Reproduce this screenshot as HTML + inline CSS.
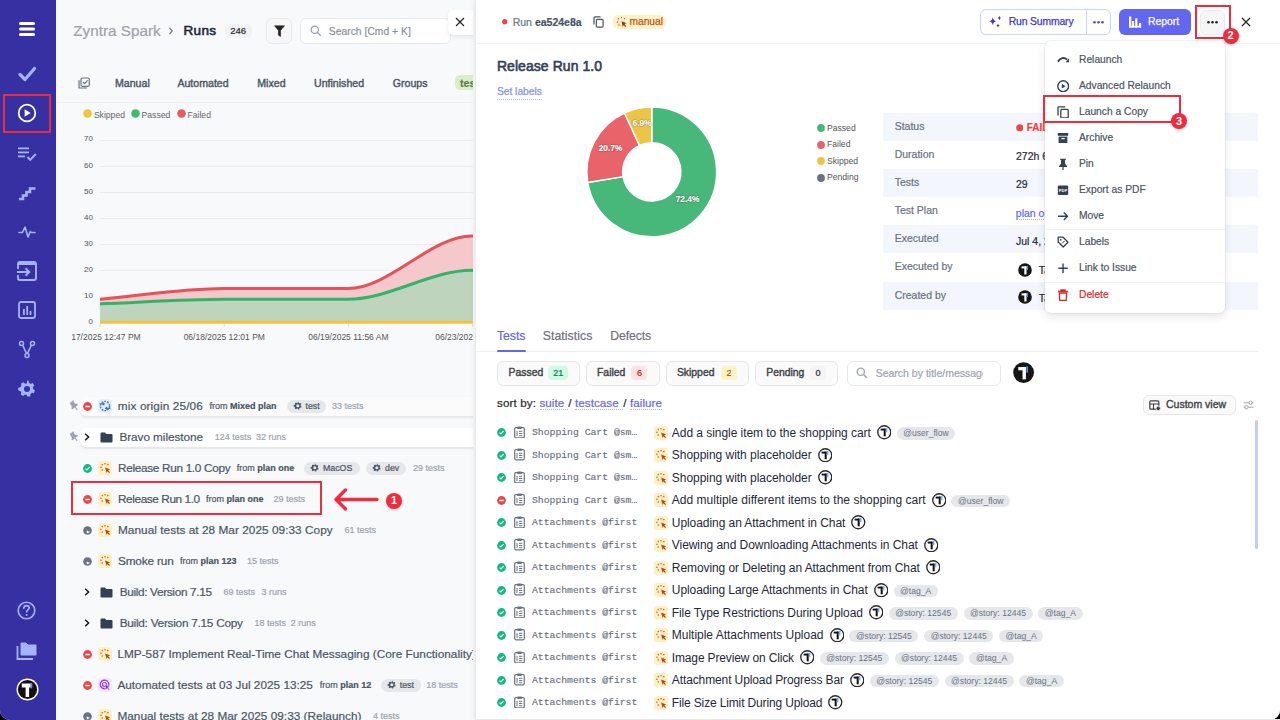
<!DOCTYPE html><html><head><meta charset="utf-8"><style>
*{margin:0;padding:0;box-sizing:border-box}
html,body{width:1280px;height:720px;overflow:hidden;background:#000}
body{position:relative;font-family:"Liberation Sans",sans-serif}
.t{position:absolute;white-space:nowrap;line-height:1;-webkit-text-stroke-width:0.2px}
svg{display:block}
</style></head><body>
<div style="position:absolute;left:0px;top:0px;width:1280px;height:720px;background:#f8f9fb;border-radius:0 0 10px 10px"></div>
<div style="position:absolute;left:0px;top:0px;width:56px;height:720px;background:#3730a3;border-bottom-left-radius:10px"></div>
<svg style="position:absolute;left:18px;top:20px" width="18" height="18" viewBox="0 0 18 18"><rect x="1" y="2" width="16" height="3" rx="1.5" fill="#fff"/><rect x="1" y="7.5" width="16" height="3" rx="1.5" fill="#fff"/><rect x="1" y="13" width="16" height="3" rx="1.5" fill="#fff"/></svg>
<svg style="position:absolute;left:17px;top:65px" width="20" height="18" viewBox="0 0 20 18"><path d="M3 9.5 L8 14.5 L17.5 3.5" stroke="#a5b4fc" stroke-width="3.2" fill="none" stroke-linecap="round" stroke-linejoin="round"/></svg>
<svg style="position:absolute;left:17px;top:103px" width="20" height="20" viewBox="0 0 20 20"><circle cx="10" cy="10" r="8.3" stroke="#fff" stroke-width="1.8" fill="none"/><path d="M7.6 6.2 L13.6 10 L7.6 13.8 Z" fill="#fff"/></svg>
<svg style="position:absolute;left:17px;top:146px" width="20" height="16" viewBox="0 0 20 16"><rect x="1" y="1.5" width="11" height="1.8" fill="#a5b4fc"/><rect x="1" y="5.5" width="11" height="1.8" fill="#a5b4fc"/><rect x="1" y="9.5" width="7" height="1.8" fill="#a5b4fc"/><path d="M10.5 11 L13.2 13.8 L18.8 8" stroke="#a5b4fc" stroke-width="1.9" fill="none"/></svg>
<svg style="position:absolute;left:18px;top:185px" width="19" height="16" viewBox="0 0 19 16"><path d="M1 14 H5 V10.5 H8.5 V7 H12 V3.5 H17.5" stroke="#a5b4fc" stroke-width="2.6" fill="none" stroke-linejoin="miter"/></svg>
<svg style="position:absolute;left:18px;top:225px" width="18" height="14" viewBox="0 0 18 14"><path d="M1 7.5 H4.5 L7 2 L10 12 L12.3 6.5 L13.5 7.5 H17" stroke="#a5b4fc" stroke-width="1.6" fill="none" stroke-linejoin="round" stroke-linecap="round"/></svg>
<svg style="position:absolute;left:16px;top:260px" width="22" height="22" viewBox="0 0 22 22"><rect x="2" y="2" width="18" height="18" rx="2" stroke="#a5b4fc" stroke-width="1.9" fill="none"/><rect x="2" y="2" width="18" height="3" fill="#a5b4fc"/><rect x="0" y="9" width="4" height="6" fill="#3730a3"/><path d="M1 12 H13 M9.5 8.3 L13.3 12 L9.5 15.7" stroke="#a5b4fc" stroke-width="1.9" fill="none"/></svg>
<svg style="position:absolute;left:18px;top:301px" width="18" height="18" viewBox="0 0 18 18"><rect x="1" y="1" width="16" height="16" rx="2" stroke="#a5b4fc" stroke-width="1.8" fill="none"/><rect x="5" y="8" width="1.8" height="6" fill="#a5b4fc"/><rect x="8.3" y="5" width="1.8" height="9" fill="#a5b4fc"/><rect x="11.6" y="10" width="1.8" height="4" fill="#a5b4fc"/></svg>
<svg style="position:absolute;left:18px;top:340px" width="18" height="19" viewBox="0 0 18 19"><circle cx="3.5" cy="3.5" r="2" stroke="#a5b4fc" stroke-width="1.5" fill="none"/><circle cx="14.5" cy="3.5" r="2" stroke="#a5b4fc" stroke-width="1.5" fill="none"/><circle cx="9" cy="15.5" r="2" stroke="#a5b4fc" stroke-width="1.5" fill="none"/><path d="M4.6 5.2 L8.5 13.3 M13.4 5.2 L9.5 13.3" stroke="#a5b4fc" stroke-width="1.5"/></svg>
<svg style="position:absolute;left:17px;top:379px" width="20" height="20" viewBox="0 0 20 20"><path d="M10 1.5l1.6.3.4 2.2c.6.2 1.1.5 1.6.9l2.1-.8 1.6 2.3-1.4 1.7c.2.6.2 1.2.2 1.9l1.8 1.3-.9 2.6-2.2-.1c-.4.5-.9.9-1.4 1.2l-.1 2.2-2.7.5-1-2c-.6 0-1.2 0-1.8-.2l-1.6 1.5-2.4-1.3.5-2.2c-.4-.5-.7-1-.9-1.6l-2.2-.5V8.8l2.2-.5c.2-.6.5-1.1.9-1.6L4.1 4.5 6.5 3.2l1.6 1.5c.6-.2 1.2-.2 1.8-.2z" fill="#a5b4fc"/><circle cx="10" cy="10" r="3" fill="#3730a3"/></svg>
<svg style="position:absolute;left:17px;top:601px" width="19" height="19" viewBox="0 0 19 19"><circle cx="9.5" cy="9.5" r="8.3" stroke="#a5b4fc" stroke-width="1.6" fill="none"/><path d="M6.8 7.2c0-1.6 1.2-2.6 2.7-2.6s2.7 1 2.7 2.4c0 1.9-2.6 2-2.6 4" stroke="#a5b4fc" stroke-width="1.6" fill="none" stroke-linecap="round"/><circle cx="9.6" cy="14" r="1" fill="#a5b4fc"/></svg>
<svg style="position:absolute;left:15px;top:640px" width="23" height="21" viewBox="0 0 23 21"><path d="M6 3 H11 L13 5 H21 V15 H6 Z" fill="#a5b4fc" stroke="#a5b4fc" stroke-width="1" stroke-linejoin="round"/><path d="M2.5 6 V19 H18" stroke="#a5b4fc" stroke-width="1.8" fill="none"/></svg>
<svg style="position:absolute;left:16px;top:678px" width="23" height="23" viewBox="0 0 23 23"><circle cx="11.5" cy="11.5" r="11" fill="#fff"/><circle cx="11.5" cy="11.5" r="9.6" fill="#111"/><path d="M5.8 5.5 H16.2 V9.6 H13.1 V19 H9.6 V9.6 H5.8 Z" fill="#fff"/><rect x="14.4" y="5.5" width="1.4" height="5" fill="#3b82f6"/></svg>
<div class="t" style="left:73.30px;top:22.69px;font-size:15.25px;color:#a1a1aa;font-weight:400;font-family:'Liberation Sans', sans-serif;">Zyntra Spark</div>
<svg style="position:absolute;left:168px;top:27px" width="6" height="8" viewBox="0 0 6 8"><path d="M1.5 1 L4.3 4 L1.5 7" stroke="#6b7280" stroke-width="1.1" fill="none"/></svg>
<div class="t" style="left:183.40px;top:23.87px;font-size:13.5px;color:#1f2937;font-weight:400;font-family:'Liberation Sans', sans-serif;-webkit-text-stroke-width:0.6px;letter-spacing:0.371px;">Runs</div>
<div style="position:absolute;left:225px;top:23.5px;width:27px;height:14.5px;background:#f1f2f4;border-radius:5px"></div>
<div class="t" style="left:230.20px;top:25.96px;font-size:9.5px;color:#27272a;font-weight:400;font-family:'Liberation Sans', sans-serif;">246</div>
<div style="position:absolute;left:266px;top:18px;width:26px;height:26px;background:#f7f7f8;border:1px solid #e5e7eb;border-radius:6px"></div>
<svg style="position:absolute;left:273.5px;top:24.5px" width="11" height="12" viewBox="0 0 11 12"><path d="M0.5 0.8 H10.5 L6.6 5.4 V11.5 L4.4 10.2 V5.4 Z" fill="#262626" stroke="#262626" stroke-width="0.6" stroke-linejoin="round"/></svg>
<div style="position:absolute;left:300px;top:18px;width:151px;height:26px;background:#fff;border:1px solid #e7e8ec;border-radius:6px"></div>
<svg style="position:absolute;left:309.5px;top:24.5px" width="12" height="12" viewBox="0 0 12 12"><circle cx="4.8" cy="4.8" r="3.6" stroke="#9ca3af" stroke-width="1.3" fill="none"/><path d="M7.5 7.5 L10.8 10.8" stroke="#9ca3af" stroke-width="1.3"/></svg>
<div class="t" style="left:328.80px;top:26.62px;font-size:10.25px;color:#8b9099;font-weight:400;font-family:'Liberation Sans', sans-serif;letter-spacing:0.051px;">Search [Cmd + K]</div>
<div style="position:absolute;left:447.5px;top:9.5px;width:28px;height:25px;background:#fff;border-radius:6px 0 0 6px;box-shadow:0 2px 5px rgba(0,0,0,0.08)"></div>
<svg style="position:absolute;left:455px;top:17px" width="10" height="10" viewBox="0 0 10 10"><path d="M1 1 L9 9 M9 1 L1 9" stroke="#222" stroke-width="1.15"/></svg>
<svg style="position:absolute;left:78px;top:77px" width="12" height="12" viewBox="0 0 12 12"><rect x="3" y="1" width="8.3" height="8.3" rx="1.5" stroke="#6b7280" stroke-width="1.2" fill="none"/><path d="M1 3.2 V11 H8.8" stroke="#6b7280" stroke-width="1.2" fill="none"/><path d="M5 5 L6.7 6.7 L9.6 3.4" stroke="#6b7280" stroke-width="1.2" fill="none"/></svg>
<div class="t" style="left:115.00px;top:77.63px;font-size:10.6px;color:#4b5563;font-weight:400;font-family:'Liberation Sans', sans-serif;-webkit-text-stroke-width:0.4px;">Manual</div>
<div class="t" style="left:177.40px;top:77.63px;font-size:10.6px;color:#4b5563;font-weight:400;font-family:'Liberation Sans', sans-serif;-webkit-text-stroke-width:0.4px;">Automated</div>
<div class="t" style="left:257.30px;top:77.63px;font-size:10.6px;color:#4b5563;font-weight:400;font-family:'Liberation Sans', sans-serif;-webkit-text-stroke-width:0.4px;">Mixed</div>
<div class="t" style="left:314.00px;top:77.63px;font-size:10.6px;color:#4b5563;font-weight:400;font-family:'Liberation Sans', sans-serif;-webkit-text-stroke-width:0.4px;">Unfinished</div>
<div class="t" style="left:392.80px;top:77.63px;font-size:10.6px;color:#4b5563;font-weight:400;font-family:'Liberation Sans', sans-serif;-webkit-text-stroke-width:0.4px;">Groups</div>
<div style="position:absolute;left:455px;top:75.3px;width:25px;height:14.8px;background:#d9efc9;border-radius:5px"></div>
<div class="t" style="left:460.00px;top:77.63px;font-size:10.6px;color:#5f7d52;font-weight:600;font-family:'Liberation Sans', sans-serif;">tes</div>
<div style="position:absolute;left:56px;top:101.5px;width:420px;height:1px;background:#eceef1"></div>
<svg style="position:absolute;left:83.0px;top:109.3px" width="9" height="9" viewBox="0 0 9 9"><circle cx="4.5" cy="4.5" r="4.3" fill="#f0c43f"/></svg>
<div class="t" style="left:93.90px;top:110.52px;font-size:8.6px;color:#666;font-weight:400;font-family:'Liberation Sans', sans-serif;-webkit-text-stroke-width:0;">Skipped</div>
<svg style="position:absolute;left:130.8px;top:109.3px" width="9" height="9" viewBox="0 0 9 9"><circle cx="4.5" cy="4.5" r="4.3" fill="#3dba6f"/></svg>
<div class="t" style="left:141.60px;top:110.52px;font-size:8.6px;color:#666;font-weight:400;font-family:'Liberation Sans', sans-serif;-webkit-text-stroke-width:0;">Passed</div>
<svg style="position:absolute;left:176.7px;top:109.3px" width="9" height="9" viewBox="0 0 9 9"><circle cx="4.5" cy="4.5" r="4.3" fill="#e65a60"/></svg>
<div class="t" style="left:187.50px;top:110.52px;font-size:8.6px;color:#666;font-weight:400;font-family:'Liberation Sans', sans-serif;-webkit-text-stroke-width:0;">Failed</div>
<div class="t" style="left:70px;width:23px;text-align:right;top:317.9px;font-size:8px;color:#555;-webkit-text-stroke-width:0">0</div>
<div class="t" style="left:70px;width:23px;text-align:right;top:291.8px;font-size:8px;color:#555;-webkit-text-stroke-width:0">10</div>
<div style="position:absolute;left:100px;top:295.5px;width:376px;height:1px;background:#e9eaec"></div>
<div class="t" style="left:70px;width:23px;text-align:right;top:265.8px;font-size:8px;color:#555;-webkit-text-stroke-width:0">20</div>
<div style="position:absolute;left:100px;top:269.5px;width:376px;height:1px;background:#e9eaec"></div>
<div class="t" style="left:70px;width:23px;text-align:right;top:239.7px;font-size:8px;color:#555;-webkit-text-stroke-width:0">30</div>
<div style="position:absolute;left:100px;top:243.5px;width:376px;height:1px;background:#e9eaec"></div>
<div class="t" style="left:70px;width:23px;text-align:right;top:213.6px;font-size:8px;color:#555;-webkit-text-stroke-width:0">40</div>
<div style="position:absolute;left:100px;top:217.5px;width:376px;height:1px;background:#e9eaec"></div>
<div class="t" style="left:70px;width:23px;text-align:right;top:187.5px;font-size:8px;color:#555;-webkit-text-stroke-width:0">50</div>
<div style="position:absolute;left:100px;top:191.5px;width:376px;height:1px;background:#e9eaec"></div>
<div class="t" style="left:70px;width:23px;text-align:right;top:161.5px;font-size:8px;color:#555;-webkit-text-stroke-width:0">60</div>
<div style="position:absolute;left:100px;top:165.5px;width:376px;height:1px;background:#e9eaec"></div>
<div class="t" style="left:70px;width:23px;text-align:right;top:135.4px;font-size:8px;color:#555;-webkit-text-stroke-width:0">70</div>
<div style="position:absolute;left:100px;top:139.5px;width:376px;height:1px;background:#e9eaec"></div>
<svg style="position:absolute;left:0;top:0" width="476" height="360" viewBox="0 0 476 360">
<path d="M100 299.2 C141.3 295.7 182.7 288.6 224 288.6 L348 288.6 C389.3 288.6 430.7 236 472 236 L476 236 L476 270.3 L472 270.3 C430.7 270.3 389.3 299.2 348 299.2 L224 299.2 C182.7 299.2 141.3 302.3 100 303.8 Z" fill="#f5c8cb"/>
<path d="M100 303.8 C141.3 302.3 182.7 299.2 224 299.2 L348 299.2 C389.3 299.2 430.7 270.3 472 270.3 L476 270.3 L476 322 L100 322 Z" fill="#bfd4bd"/>
<path d="M100 299.2 C141.3 295.7 182.7 288.6 224 288.6 L348 288.6 C389.3 288.6 430.7 236 472 236 L476 236" stroke="#e4525c" stroke-width="3" fill="none"/>
<path d="M100 303.8 C141.3 302.3 182.7 299.2 224 299.2 L348 299.2 C389.3 299.2 430.7 270.3 472 270.3 L476 270.3" stroke="#33b268" stroke-width="3" fill="none"/>
<path d="M100 322.3 H476" stroke="#f0c43f" stroke-width="3"/>
<path d="M100 324 V327 M224.3 324 V327 M348.4 324 V327 M472.6 324 V327" stroke="#ddd" stroke-width="1"/>
</svg>
<div style="position:absolute;left:72px;top:325px;width:404px;height:20px;overflow:hidden">
<div class="t" style="left:-17px;width:90px;text-align:center;top:8px;font-size:8.5px;color:#555;-webkit-text-stroke-width:0">06/17/2025 12:47 PM</div>
<div class="t" style="left:107.30000000000001px;width:90px;text-align:center;top:8px;font-size:8.5px;color:#555;-webkit-text-stroke-width:0">06/18/2025 12:01 PM</div>
<div class="t" style="left:231.39999999999998px;width:90px;text-align:center;top:8px;font-size:8.5px;color:#555;-webkit-text-stroke-width:0">06/19/2025 11:56 AM</div>
<div class="t" style="left:358.6px;width:90px;text-align:center;top:8px;font-size:8.5px;color:#555;-webkit-text-stroke-width:0">06/23/2025 10:02 AM</div>
</div>
<div style="position:absolute;left:79.5px;top:397px;width:397px;height:19px;background:#fbfbfc;border-radius:6px 0 0 6px;box-shadow:0 1.5px 2px rgba(0,0,0,0.08)"></div>
<div style="position:absolute;left:79.5px;top:427.5px;width:397px;height:19px;background:#fff;border-radius:6px 0 0 6px;box-shadow:0 1.5px 2px rgba(0,0,0,0.08)"></div>
<svg style="position:absolute;left:68.5px;top:400px" width="11" height="11" viewBox="0 0 11 11"><g transform="rotate(-38 5.5 5.5)"><path d="M3.2 0.6 H7.8 V1.8 H7 L7.2 4.6 L8.8 6.2 V7.2 H1.2 V6.2 L2.8 4.6 L3 1.8 H3.2 Z" fill="#9ca3af"/><path d="M5 7.2 V10.6" stroke="#9ca3af" stroke-width="1.1"/></g></svg>
<svg style="position:absolute;left:68.5px;top:431px" width="11" height="11" viewBox="0 0 11 11"><g transform="rotate(-38 5.5 5.5)"><path d="M3.2 0.6 H7.8 V1.8 H7 L7.2 4.6 L8.8 6.2 V7.2 H1.2 V6.2 L2.8 4.6 L3 1.8 H3.2 Z" fill="#9ca3af"/><path d="M5 7.2 V10.6" stroke="#9ca3af" stroke-width="1.1"/></g></svg>
<svg style="position:absolute;left:82.8px;top:401.5px" width="9" height="9" viewBox="0 0 9 9"><circle cx="4.5" cy="4.5" r="4.4" fill="#ef4444"/><rect x="2.2" y="3.8" width="4.6" height="1.5" rx="0.5" fill="#fff"/></svg>
<svg style="position:absolute;left:98.3px;top:399px" width="14" height="14" viewBox="0 0 14 14"><rect width="14" height="14" rx="3" fill="#e3eefc"/><circle cx="7" cy="7" r="4.6" stroke="#3572b8" stroke-width="1.2" fill="none" stroke-dasharray="1.8 1.1"/><path d="M1.6 4.9 H5.8" stroke="#3572b8" stroke-width="1.2"/><path d="M4.8 3 L7.2 4.9 L4.8 6.8 Z" fill="#3572b8"/><path d="M12.4 9.3 H8.2" stroke="#3572b8" stroke-width="1.2"/><path d="M9.2 7.4 L6.8 9.3 L9.2 11.2 Z" fill="#3572b8"/></svg>
<div class="t" style="left:117.80px;top:400.81px;font-size:11.8px;color:#4b5563;font-weight:400;font-family:'Liberation Sans', sans-serif;letter-spacing:0.119px;">mix origin 25/06</div>
<div class="t" style="left:209.50px;top:401.58px;font-size:9px;color:#4b5563;font-weight:400;font-family:'Liberation Sans', sans-serif;">from <b>Mixed plan</b></div>
<div style="position:absolute;left:286.5px;top:399.5px;width:39px;height:13px;background:#e5e7eb;border-radius:7px"></div>
<svg style="position:absolute;left:292.5px;top:401.2px" width="9.6" height="9.6" viewBox="0 0 9.6 9.6"><g transform="scale(0.48)"><path d="M10 1.5l1.6.3.4 2.2c.6.2 1.1.5 1.6.9l2.1-.8 1.6 2.3-1.4 1.7c.2.6.2 1.2.2 1.9l1.8 1.3-.9 2.6-2.2-.1c-.4.5-.9.9-1.4 1.2l-.1 2.2-2.7.5-1-2c-.6 0-1.2 0-1.8-.2l-1.6 1.5-2.4-1.3.5-2.2c-.4-.5-.7-1-.9-1.6l-2.2-.5V8.8l2.2-.5c.2-.6.5-1.1.9-1.6L4.1 4.5 6.5 3.2l1.6 1.5c.6-.2 1.2-.2 1.8-.2z" fill="#4b5563"/><circle cx="10" cy="10" r="3.2" fill="#e5e7eb"/></g></svg>
<div class="t" style="left:305.50px;top:401.75px;font-size:8.8px;color:#4b5563;font-weight:400;font-family:'Liberation Sans', sans-serif;">test</div>
<div class="t" style="left:332.00px;top:401.58px;font-size:9px;color:#9ca3af;font-weight:400;font-family:'Liberation Sans', sans-serif;">33 tests</div>
<svg style="position:absolute;left:84px;top:433px" width="6" height="8" viewBox="0 0 6 8"><path d="M1.2 0.8 L4.6 4 L1.2 7.2" stroke="#111" stroke-width="1.4" fill="none"/></svg>
<svg style="position:absolute;left:99.5px;top:431.5px" width="13" height="11" viewBox="0 0 13 11"><path d="M0.5 1.5 Q0.5 0.5 1.5 0.5 H5 L6.3 2 H11.5 Q12.5 2 12.5 3 V9.8 Q12.5 10.6 11.6 10.6 H1.4 Q0.5 10.6 0.5 9.8 Z" fill="#334155"/></svg>
<div class="t" style="left:119.40px;top:431.81px;font-size:11.8px;color:#4b5563;font-weight:400;font-family:'Liberation Sans', sans-serif;letter-spacing:-0.067px;">Bravo milestone</div>
<div class="t" style="left:214.80px;top:432.58px;font-size:9px;color:#9ca3af;font-weight:400;font-family:'Liberation Sans', sans-serif;">124 tests</div>
<div class="t" style="left:256.00px;top:432.58px;font-size:9px;color:#9ca3af;font-weight:400;font-family:'Liberation Sans', sans-serif;">32 runs</div>
<svg style="position:absolute;left:82.8px;top:463.5px" width="9" height="9" viewBox="0 0 9 9"><circle cx="4.5" cy="4.5" r="4.4" fill="#10b981"/><path d="M2.5 4.6 L3.9 6 L6.6 3.2" stroke="#fff" stroke-width="1.2" fill="none"/></svg>
<svg style="position:absolute;left:98.3px;top:461px" width="14" height="14" viewBox="0 0 14 14"><rect x="0" y="0" width="14" height="14" rx="3.2" fill="#fef0c4"/><g transform="scale(1.0)"><path d="M7.1 6.5 L12.2 8.4 L10.2 9.3 L12 11.3 L11.1 12.1 L9.4 10.2 L8.6 12.1 Z" fill="#b4460f"/><circle cx="4.3" cy="3.6" r="0.8" fill="#d0601e"/><circle cx="7" cy="2.7" r="0.8" fill="#d0601e"/><circle cx="9.8" cy="3.6" r="0.8" fill="#d0601e"/><circle cx="2.9" cy="6.2" r="0.8" fill="#d0601e"/><circle cx="4.3" cy="9" r="0.8" fill="#d0601e"/></g></svg>
<div class="t" style="left:118.00px;top:462.81px;font-size:11.8px;color:#4b5563;font-weight:400;font-family:'Liberation Sans', sans-serif;letter-spacing:-0.321px;">Release Run 1.0 Copy</div>
<div class="t" style="left:236.80px;top:463.58px;font-size:9px;color:#4b5563;font-weight:400;font-family:'Liberation Sans', sans-serif;">from <b>plan one</b></div>
<div style="position:absolute;left:304px;top:461.5px;width:56px;height:13px;background:#e5e7eb;border-radius:7px"></div>
<svg style="position:absolute;left:310px;top:463.2px" width="9.6" height="9.6" viewBox="0 0 9.6 9.6"><g transform="scale(0.48)"><path d="M10 1.5l1.6.3.4 2.2c.6.2 1.1.5 1.6.9l2.1-.8 1.6 2.3-1.4 1.7c.2.6.2 1.2.2 1.9l1.8 1.3-.9 2.6-2.2-.1c-.4.5-.9.9-1.4 1.2l-.1 2.2-2.7.5-1-2c-.6 0-1.2 0-1.8-.2l-1.6 1.5-2.4-1.3.5-2.2c-.4-.5-.7-1-.9-1.6l-2.2-.5V8.8l2.2-.5c.2-.6.5-1.1.9-1.6L4.1 4.5 6.5 3.2l1.6 1.5c.6-.2 1.2-.2 1.8-.2z" fill="#4b5563"/><circle cx="10" cy="10" r="3.2" fill="#e5e7eb"/></g></svg>
<div class="t" style="left:323.00px;top:463.75px;font-size:8.8px;color:#4b5563;font-weight:400;font-family:'Liberation Sans', sans-serif;">MacOS</div>
<div style="position:absolute;left:366px;top:461.5px;width:40px;height:13px;background:#e5e7eb;border-radius:7px"></div>
<svg style="position:absolute;left:372px;top:463.2px" width="9.6" height="9.6" viewBox="0 0 9.6 9.6"><g transform="scale(0.48)"><path d="M10 1.5l1.6.3.4 2.2c.6.2 1.1.5 1.6.9l2.1-.8 1.6 2.3-1.4 1.7c.2.6.2 1.2.2 1.9l1.8 1.3-.9 2.6-2.2-.1c-.4.5-.9.9-1.4 1.2l-.1 2.2-2.7.5-1-2c-.6 0-1.2 0-1.8-.2l-1.6 1.5-2.4-1.3.5-2.2c-.4-.5-.7-1-.9-1.6l-2.2-.5V8.8l2.2-.5c.2-.6.5-1.1.9-1.6L4.1 4.5 6.5 3.2l1.6 1.5c.6-.2 1.2-.2 1.8-.2z" fill="#4b5563"/><circle cx="10" cy="10" r="3.2" fill="#e5e7eb"/></g></svg>
<div class="t" style="left:385.00px;top:463.75px;font-size:8.8px;color:#4b5563;font-weight:400;font-family:'Liberation Sans', sans-serif;">dev</div>
<div class="t" style="left:413.00px;top:463.58px;font-size:9px;color:#9ca3af;font-weight:400;font-family:'Liberation Sans', sans-serif;">29 tests</div>
<svg style="position:absolute;left:82.8px;top:494.5px" width="9" height="9" viewBox="0 0 9 9"><circle cx="4.5" cy="4.5" r="4.4" fill="#ef4444"/><rect x="2.2" y="3.8" width="4.6" height="1.5" rx="0.5" fill="#fff"/></svg>
<svg style="position:absolute;left:98.3px;top:492px" width="14" height="14" viewBox="0 0 14 14"><rect x="0" y="0" width="14" height="14" rx="3.2" fill="#fef0c4"/><g transform="scale(1.0)"><path d="M7.1 6.5 L12.2 8.4 L10.2 9.3 L12 11.3 L11.1 12.1 L9.4 10.2 L8.6 12.1 Z" fill="#b4460f"/><circle cx="4.3" cy="3.6" r="0.8" fill="#d0601e"/><circle cx="7" cy="2.7" r="0.8" fill="#d0601e"/><circle cx="9.8" cy="3.6" r="0.8" fill="#d0601e"/><circle cx="2.9" cy="6.2" r="0.8" fill="#d0601e"/><circle cx="4.3" cy="9" r="0.8" fill="#d0601e"/></g></svg>
<div class="t" style="left:118.00px;top:493.81px;font-size:11.8px;color:#4b5563;font-weight:400;font-family:'Liberation Sans', sans-serif;letter-spacing:-0.407px;">Release Run 1.0</div>
<div class="t" style="left:206.00px;top:494.58px;font-size:9px;color:#4b5563;font-weight:400;font-family:'Liberation Sans', sans-serif;">from <b>plan one</b></div>
<div class="t" style="left:273.50px;top:494.58px;font-size:9px;color:#9ca3af;font-weight:400;font-family:'Liberation Sans', sans-serif;">29 tests</div>
<svg style="position:absolute;left:82.8px;top:525.5px" width="9" height="9" viewBox="0 0 9 9"><circle cx="4.5" cy="4.5" r="4.3" fill="#6b7280"/><path d="M3.6 4.4 L7 5.9 L3.9 7.6 Z" fill="#fff"/></svg>
<svg style="position:absolute;left:98.3px;top:523px" width="14" height="14" viewBox="0 0 14 14"><rect x="0" y="0" width="14" height="14" rx="3.2" fill="#fef0c4"/><g transform="scale(1.0)"><path d="M7.1 6.5 L12.2 8.4 L10.2 9.3 L12 11.3 L11.1 12.1 L9.4 10.2 L8.6 12.1 Z" fill="#b4460f"/><circle cx="4.3" cy="3.6" r="0.8" fill="#d0601e"/><circle cx="7" cy="2.7" r="0.8" fill="#d0601e"/><circle cx="9.8" cy="3.6" r="0.8" fill="#d0601e"/><circle cx="2.9" cy="6.2" r="0.8" fill="#d0601e"/><circle cx="4.3" cy="9" r="0.8" fill="#d0601e"/></g></svg>
<div class="t" style="left:118.00px;top:524.81px;font-size:11.8px;color:#4b5563;font-weight:400;font-family:'Liberation Sans', sans-serif;letter-spacing:0.042px;">Manual tests at 28 Mar 2025 09:33 Copy</div>
<div class="t" style="left:344.50px;top:525.58px;font-size:9px;color:#9ca3af;font-weight:400;font-family:'Liberation Sans', sans-serif;">61 tests</div>
<svg style="position:absolute;left:82.8px;top:556.5px" width="9" height="9" viewBox="0 0 9 9"><circle cx="4.5" cy="4.5" r="4.3" fill="#6b7280"/><path d="M3.6 4.4 L7 5.9 L3.9 7.6 Z" fill="#fff"/></svg>
<svg style="position:absolute;left:98.3px;top:554px" width="14" height="14" viewBox="0 0 14 14"><rect x="0" y="0" width="14" height="14" rx="3.2" fill="#fef0c4"/><g transform="scale(1.0)"><path d="M7.1 6.5 L12.2 8.4 L10.2 9.3 L12 11.3 L11.1 12.1 L9.4 10.2 L8.6 12.1 Z" fill="#b4460f"/><circle cx="4.3" cy="3.6" r="0.8" fill="#d0601e"/><circle cx="7" cy="2.7" r="0.8" fill="#d0601e"/><circle cx="9.8" cy="3.6" r="0.8" fill="#d0601e"/><circle cx="2.9" cy="6.2" r="0.8" fill="#d0601e"/><circle cx="4.3" cy="9" r="0.8" fill="#d0601e"/></g></svg>
<div class="t" style="left:118.00px;top:555.81px;font-size:11.8px;color:#4b5563;font-weight:400;font-family:'Liberation Sans', sans-serif;letter-spacing:-0.162px;">Smoke run</div>
<div class="t" style="left:180.00px;top:556.58px;font-size:9px;color:#4b5563;font-weight:400;font-family:'Liberation Sans', sans-serif;">from <b>plan 123</b></div>
<div class="t" style="left:247.00px;top:556.58px;font-size:9px;color:#9ca3af;font-weight:400;font-family:'Liberation Sans', sans-serif;">15 tests</div>
<svg style="position:absolute;left:84px;top:588px" width="6" height="8" viewBox="0 0 6 8"><path d="M1.2 0.8 L4.6 4 L1.2 7.2" stroke="#111" stroke-width="1.4" fill="none"/></svg>
<svg style="position:absolute;left:99.5px;top:586.5px" width="13" height="11" viewBox="0 0 13 11"><path d="M0.5 1.5 Q0.5 0.5 1.5 0.5 H5 L6.3 2 H11.5 Q12.5 2 12.5 3 V9.8 Q12.5 10.6 11.6 10.6 H1.4 Q0.5 10.6 0.5 9.8 Z" fill="#334155"/></svg>
<div class="t" style="left:119.70px;top:586.81px;font-size:11.8px;color:#4b5563;font-weight:400;font-family:'Liberation Sans', sans-serif;letter-spacing:-0.337px;">Build: Version 7.15</div>
<div class="t" style="left:223.50px;top:587.58px;font-size:9px;color:#9ca3af;font-weight:400;font-family:'Liberation Sans', sans-serif;">69 tests</div>
<div class="t" style="left:261.40px;top:587.58px;font-size:9px;color:#9ca3af;font-weight:400;font-family:'Liberation Sans', sans-serif;">3 runs</div>
<svg style="position:absolute;left:84px;top:619px" width="6" height="8" viewBox="0 0 6 8"><path d="M1.2 0.8 L4.6 4 L1.2 7.2" stroke="#111" stroke-width="1.4" fill="none"/></svg>
<svg style="position:absolute;left:99.5px;top:617.5px" width="13" height="11" viewBox="0 0 13 11"><path d="M0.5 1.5 Q0.5 0.5 1.5 0.5 H5 L6.3 2 H11.5 Q12.5 2 12.5 3 V9.8 Q12.5 10.6 11.6 10.6 H1.4 Q0.5 10.6 0.5 9.8 Z" fill="#334155"/></svg>
<div class="t" style="left:119.70px;top:617.81px;font-size:11.8px;color:#4b5563;font-weight:400;font-family:'Liberation Sans', sans-serif;letter-spacing:-0.259px;">Build: Version 7.15 Copy</div>
<div class="t" style="left:254.40px;top:618.58px;font-size:9px;color:#9ca3af;font-weight:400;font-family:'Liberation Sans', sans-serif;">18 tests</div>
<div class="t" style="left:290.70px;top:618.58px;font-size:9px;color:#9ca3af;font-weight:400;font-family:'Liberation Sans', sans-serif;">2 runs</div>
<svg style="position:absolute;left:82.8px;top:649.5px" width="9" height="9" viewBox="0 0 9 9"><circle cx="4.5" cy="4.5" r="4.4" fill="#ef4444"/><rect x="2.2" y="3.8" width="4.6" height="1.5" rx="0.5" fill="#fff"/></svg>
<svg style="position:absolute;left:98.3px;top:647px" width="14" height="14" viewBox="0 0 14 14"><rect x="0" y="0" width="14" height="14" rx="3.2" fill="#fef0c4"/><g transform="scale(1.0)"><path d="M7.1 6.5 L12.2 8.4 L10.2 9.3 L12 11.3 L11.1 12.1 L9.4 10.2 L8.6 12.1 Z" fill="#b4460f"/><circle cx="4.3" cy="3.6" r="0.8" fill="#d0601e"/><circle cx="7" cy="2.7" r="0.8" fill="#d0601e"/><circle cx="9.8" cy="3.6" r="0.8" fill="#d0601e"/><circle cx="2.9" cy="6.2" r="0.8" fill="#d0601e"/><circle cx="4.3" cy="9" r="0.8" fill="#d0601e"/></g></svg>
<div class="t" style="left:117.40px;top:648.81px;font-size:11.8px;color:#4b5563;font-weight:400;font-family:'Liberation Sans', sans-serif;letter-spacing:0.003px;">LMP-587 Implement Real-Time Chat Messaging (Core Functionality)</div>
<svg style="position:absolute;left:82.8px;top:680.5px" width="9" height="9" viewBox="0 0 9 9"><circle cx="4.5" cy="4.5" r="4.4" fill="#ef4444"/><rect x="2.2" y="3.8" width="4.6" height="1.5" rx="0.5" fill="#fff"/></svg>
<svg style="position:absolute;left:98.3px;top:678px" width="14" height="14" viewBox="0 0 14 14"><rect width="14" height="14" rx="3" fill="#f3e8ff"/><circle cx="6.5" cy="6.5" r="4.3" stroke="#9333ea" stroke-width="1.2" fill="none"/><circle cx="6.5" cy="6.5" r="2" stroke="#9333ea" stroke-width="1.1" fill="none"/><path d="M6.8 6.8 L11.8 8.6 L9.8 9.5 L11.6 11.5 L10.8 12.2 L9 10.2 L8.3 12 Z" fill="#7e22ce" stroke="#f3e8ff" stroke-width="0.5"/></svg>
<div class="t" style="left:117.40px;top:679.81px;font-size:11.8px;color:#4b5563;font-weight:400;font-family:'Liberation Sans', sans-serif;letter-spacing:0.003px;">Automated tests at 03 Jul 2025 13:25</div>
<div class="t" style="left:319.70px;top:680.58px;font-size:9px;color:#4b5563;font-weight:400;font-family:'Liberation Sans', sans-serif;">from <b>plan 12</b></div>
<div style="position:absolute;left:380.7px;top:678.5px;width:40px;height:13px;background:#e5e7eb;border-radius:7px"></div>
<svg style="position:absolute;left:386.7px;top:680.2px" width="9.6" height="9.6" viewBox="0 0 9.6 9.6"><g transform="scale(0.48)"><path d="M10 1.5l1.6.3.4 2.2c.6.2 1.1.5 1.6.9l2.1-.8 1.6 2.3-1.4 1.7c.2.6.2 1.2.2 1.9l1.8 1.3-.9 2.6-2.2-.1c-.4.5-.9.9-1.4 1.2l-.1 2.2-2.7.5-1-2c-.6 0-1.2 0-1.8-.2l-1.6 1.5-2.4-1.3.5-2.2c-.4-.5-.7-1-.9-1.6l-2.2-.5V8.8l2.2-.5c.2-.6.5-1.1.9-1.6L4.1 4.5 6.5 3.2l1.6 1.5c.6-.2 1.2-.2 1.8-.2z" fill="#4b5563"/><circle cx="10" cy="10" r="3.2" fill="#e5e7eb"/></g></svg>
<div class="t" style="left:399.70px;top:680.75px;font-size:8.8px;color:#4b5563;font-weight:400;font-family:'Liberation Sans', sans-serif;">test</div>
<div class="t" style="left:426.20px;top:680.58px;font-size:9px;color:#9ca3af;font-weight:400;font-family:'Liberation Sans', sans-serif;">18 tests</div>
<svg style="position:absolute;left:82.8px;top:711.5px" width="9" height="9" viewBox="0 0 9 9"><circle cx="4.5" cy="4.5" r="4.3" fill="#6b7280"/><path d="M3.6 4.4 L7 5.9 L3.9 7.6 Z" fill="#fff"/></svg>
<svg style="position:absolute;left:98.3px;top:709px" width="14" height="14" viewBox="0 0 14 14"><rect x="0" y="0" width="14" height="14" rx="3.2" fill="#fef0c4"/><g transform="scale(1.0)"><path d="M7.1 6.5 L12.2 8.4 L10.2 9.3 L12 11.3 L11.1 12.1 L9.4 10.2 L8.6 12.1 Z" fill="#b4460f"/><circle cx="4.3" cy="3.6" r="0.8" fill="#d0601e"/><circle cx="7" cy="2.7" r="0.8" fill="#d0601e"/><circle cx="9.8" cy="3.6" r="0.8" fill="#d0601e"/><circle cx="2.9" cy="6.2" r="0.8" fill="#d0601e"/><circle cx="4.3" cy="9" r="0.8" fill="#d0601e"/></g></svg>
<div class="t" style="left:117.40px;top:710.81px;font-size:11.8px;color:#4b5563;font-weight:400;font-family:'Liberation Sans', sans-serif;letter-spacing:0.019px;">Manual tests at 28 Mar 2025 09:33 (Relaunch)</div>
<div class="t" style="left:373.00px;top:711.58px;font-size:9px;color:#9ca3af;font-weight:400;font-family:'Liberation Sans', sans-serif;">4 tests</div>
<div style="position:absolute;left:473.3px;top:348.5px;width:2.5px;height:22px;background:#e5e7eb;border-radius:2px"></div>
<div style="position:absolute;left:473.2px;top:0px;width:3.3px;height:720px;background:linear-gradient(90deg,#f7f8f9,#f1f2f4)"></div>
<div style="position:absolute;left:476px;top:0px;width:804px;height:720px;background:#fff;box-shadow:-2px 0 5px rgba(0,0,0,0.05);border-bottom-right-radius:10px"></div>
<div style="position:absolute;left:476px;top:43px;width:804px;height:1px;background:#eef0f3"></div>
<svg style="position:absolute;left:502.3px;top:19.3px" width="5.4" height="5.4" viewBox="0 0 5.4 5.4"><circle cx="2.7" cy="2.7" r="2.6" fill="#ef4444"/></svg>
<div class="t" style="left:512.70px;top:16.51px;font-size:10.5px;color:#64748b;font-weight:400;font-family:'Liberation Sans', sans-serif;">Run <b style="color:#475569">ea524e8a</b></div>
<svg style="position:absolute;left:592.5px;top:16px" width="11" height="12" viewBox="0 0 11 12"><rect x="3.3" y="3.3" width="6.8" height="7.9" rx="1.2" stroke="#4b5563" stroke-width="1.2" fill="none"/><path d="M1 8.5 V2 Q1 0.9 2.1 0.9 H7.5" stroke="#4b5563" stroke-width="1.2" fill="none"/></svg>
<div style="position:absolute;left:612.7px;top:15.2px;width:53.5px;height:13.5px;background:#fef0c7;border-radius:5px"></div>
<svg style="position:absolute;left:616px;top:16.3px" width="12" height="12" viewBox="0 0 12 12"><path d="M5.6 5.2 L10.6 7.2 L8.5 8.1 L10.3 10.2 L9.4 10.9 L7.7 8.9 L6.7 10.9 Z" fill="#9a3412"/><circle cx="5.5" cy="1.6" r="0.7" fill="#c2410c"/><circle cx="8.5" cy="2.6" r="0.7" fill="#c2410c"/><circle cx="2.4" cy="2.8" r="0.7" fill="#c2410c"/><circle cx="1.6" cy="6" r="0.7" fill="#c2410c"/><circle cx="3" cy="9" r="0.7" fill="#c2410c"/></svg>
<div class="t" style="left:629.40px;top:16.72px;font-size:10.25px;color:#b45309;font-weight:400;font-family:'Liberation Sans', sans-serif;">manual</div>
<div style="position:absolute;left:980.3px;top:9px;width:131px;height:26px;background:#fff;border:1px solid #c7d2fe;border-radius:6px"></div>
<div style="position:absolute;left:1085.5px;top:9px;width:1px;height:26px;background:#c7d2fe"></div>
<svg style="position:absolute;left:988px;top:15px" width="14" height="14" viewBox="0 0 14 14"><path d="M4.75 2.2 Q5.3 5.6 8.2 6.2 Q5.3 6.8 4.75 10.2 Q4.2 6.8 1.3 6.2 Q4.2 5.6 4.75 2.2 Z" fill="#4338ca"/><path d="M11.4 0.8 Q11.8 2.7 13 3.1 Q11.8 3.5 11.4 5.4 Q11 3.5 9.8 3.1 Q11 2.7 11.4 0.8 Z" fill="#4338ca"/><path d="M10 8.4 Q10.4 10.2 11.6 10.6 Q10.4 11 10 12.8 Q9.6 11 8.4 10.6 Q9.6 10.2 10 8.4 Z" fill="#4338ca"/></svg>
<div class="t" style="left:1008.70px;top:17.10px;font-size:10.4px;color:#4338ca;font-weight:400;font-family:'Liberation Sans', sans-serif;-webkit-text-stroke:0.25px #4338ca;letter-spacing:-0.151px;">Run Summary</div>
<svg style="position:absolute;left:1092.5px;top:19.5px" width="11" height="5" viewBox="0 0 11 5"><circle cx="1.5" cy="2.3" r="1.3" fill="#4f46e5"/><circle cx="5.5" cy="2.3" r="1.3" fill="#4f46e5"/><circle cx="9.5" cy="2.3" r="1.3" fill="#4f46e5"/></svg>
<div style="position:absolute;left:1119px;top:9.3px;width:72.3px;height:25.5px;background:#6366f1;border-radius:6px"></div>
<svg style="position:absolute;left:1128px;top:15px" width="14" height="13" viewBox="0 0 14 13"><rect x="1" y="1.5" width="2.3" height="11" fill="#fff"/><rect x="4.1" y="6" width="2" height="6.5" fill="#fff"/><rect x="7.2" y="3.3" width="2.2" height="9.2" fill="#fff"/><rect x="11" y="8" width="2.1" height="4.5" fill="#fff"/><rect x="1" y="10.8" width="12.1" height="1.7" fill="#fff"/></svg>
<div class="t" style="left:1148.10px;top:17.00px;font-size:10.4px;color:#fff;font-weight:400;font-family:'Liberation Sans', sans-serif;-webkit-text-stroke:0.25px #fff;letter-spacing:-0.036px;">Report</div>
<div style="position:absolute;left:1200px;top:9.7px;width:25px;height:25px;background:#f6f6f7;border:1px solid #ebebed;border-radius:6px"></div>
<svg style="position:absolute;left:1207px;top:19.5px" width="11" height="5" viewBox="0 0 11 5"><circle cx="1.5" cy="2.3" r="1.3" fill="#222"/><circle cx="5.5" cy="2.3" r="1.3" fill="#222"/><circle cx="9.5" cy="2.3" r="1.3" fill="#222"/></svg>
<svg style="position:absolute;left:1241px;top:17px" width="10" height="10" viewBox="0 0 10 10"><path d="M1 1 L9 9 M9 1 L1 9" stroke="#222" stroke-width="1.15"/></svg>
<div class="t" style="left:496.90px;top:58.75px;font-size:14px;color:#334155;font-weight:400;font-family:'Liberation Sans', sans-serif;-webkit-text-stroke-width:0.6px;letter-spacing:0.067px;">Release Run 1.0</div>
<div class="t" style="left:496.90px;top:86.62px;font-size:10.25px;color:#818cf8;font-weight:400;font-family:'Liberation Sans', sans-serif;border-bottom:1px dotted #a5b4fc;padding-bottom:2px;">Set labels</div>
<svg style="position:absolute;left:0;top:0" width="1280" height="260" viewBox="0 0 1280 260"><path d="M651.75 107.00 A64.9 64.9 0 1 1 587.71 182.46 L623.04 176.63 A29.1 29.1 0 1 0 651.75 142.80 Z" fill="#48b87a" stroke="#fff" stroke-width="1.5" stroke-linejoin="round"/><path d="M587.71 182.46 A64.9 64.9 0 0 1 624.49 113.00 L639.53 145.49 A29.1 29.1 0 0 0 623.04 176.63 Z" fill="#e8636a" stroke="#fff" stroke-width="1.5" stroke-linejoin="round"/><path d="M624.49 113.00 A64.9 64.9 0 0 1 651.75 107.00 L651.75 142.80 A29.1 29.1 0 0 0 639.53 145.49 Z" fill="#ebc545" stroke="#fff" stroke-width="1.5" stroke-linejoin="round"/></svg>
<div class="t" style="left:617px;width:50px;text-align:center;top:119.25px;font-size:8.3px;font-weight:700;color:#fff;text-shadow:0 0 1.5px rgba(0,0,0,0.6),0 0 1px rgba(0,0,0,0.4)">6.9%</div>
<div class="t" style="left:585.5px;width:50px;text-align:center;top:143.5px;font-size:8.3px;font-weight:700;color:#fff;text-shadow:0 0 1.5px rgba(0,0,0,0.6),0 0 1px rgba(0,0,0,0.4)">20.7%</div>
<div class="t" style="left:662.5px;width:50px;text-align:center;top:195.0px;font-size:8.3px;font-weight:700;color:#fff;text-shadow:0 0 1.5px rgba(0,0,0,0.6),0 0 1px rgba(0,0,0,0.4)">72.4%</div>
<svg style="position:absolute;left:816.8px;top:124px" width="8" height="8" viewBox="0 0 8 8"><circle cx="4" cy="4" r="3.9" fill="#48b87a"/></svg>
<div class="t" style="left:827.00px;top:123.92px;font-size:8.6px;color:#555;font-weight:400;font-family:'Liberation Sans', sans-serif;-webkit-text-stroke-width:0;">Passed</div>
<svg style="position:absolute;left:816.8px;top:140.5px" width="8" height="8" viewBox="0 0 8 8"><circle cx="4" cy="4" r="3.9" fill="#e8636a"/></svg>
<div class="t" style="left:827.00px;top:140.42px;font-size:8.6px;color:#555;font-weight:400;font-family:'Liberation Sans', sans-serif;-webkit-text-stroke-width:0;">Failed</div>
<svg style="position:absolute;left:816.8px;top:157.2px" width="8" height="8" viewBox="0 0 8 8"><circle cx="4" cy="4" r="3.9" fill="#ebc545"/></svg>
<div class="t" style="left:827.00px;top:157.12px;font-size:8.6px;color:#555;font-weight:400;font-family:'Liberation Sans', sans-serif;-webkit-text-stroke-width:0;">Skipped</div>
<svg style="position:absolute;left:816.8px;top:173.5px" width="8" height="8" viewBox="0 0 8 8"><circle cx="4" cy="4" r="3.9" fill="#6b7280"/></svg>
<div class="t" style="left:827.00px;top:173.42px;font-size:8.6px;color:#555;font-weight:400;font-family:'Liberation Sans', sans-serif;-webkit-text-stroke-width:0;">Pending</div>
<div style="position:absolute;left:883px;top:113px;width:375px;height:28px;background:#f3f6fd"></div>
<div class="t" style="left:894.70px;top:121.11px;font-size:10.5px;color:#6b7280;font-weight:400;font-family:'Liberation Sans', sans-serif;">Status</div>
<div class="t" style="left:894.70px;top:149.11px;font-size:10.5px;color:#6b7280;font-weight:400;font-family:'Liberation Sans', sans-serif;">Duration</div>
<div style="position:absolute;left:883px;top:169px;width:375px;height:28px;background:#f3f6fd"></div>
<div class="t" style="left:894.70px;top:177.11px;font-size:10.5px;color:#6b7280;font-weight:400;font-family:'Liberation Sans', sans-serif;">Tests</div>
<div class="t" style="left:894.70px;top:205.11px;font-size:10.5px;color:#6b7280;font-weight:400;font-family:'Liberation Sans', sans-serif;">Test Plan</div>
<div style="position:absolute;left:883px;top:225px;width:375px;height:28px;background:#f3f6fd"></div>
<div class="t" style="left:894.70px;top:233.11px;font-size:10.5px;color:#6b7280;font-weight:400;font-family:'Liberation Sans', sans-serif;">Executed</div>
<div class="t" style="left:894.70px;top:261.11px;font-size:10.5px;color:#6b7280;font-weight:400;font-family:'Liberation Sans', sans-serif;">Executed by</div>
<div style="position:absolute;left:883px;top:282px;width:375px;height:28px;background:#f3f6fd"></div>
<div class="t" style="left:894.70px;top:290.11px;font-size:10.5px;color:#6b7280;font-weight:400;font-family:'Liberation Sans', sans-serif;">Created by</div>
<svg style="position:absolute;left:1015.8px;top:124.2px" width="7.5" height="7.5" viewBox="0 0 7.5 7.5"><circle cx="3.75" cy="3.75" r="3.6" fill="#ef4444"/></svg>
<div class="t" style="left:1026.80px;top:123.23px;font-size:10px;color:#ef4444;font-weight:700;font-family:'Liberation Sans', sans-serif;">FAILED</div>
<div class="t" style="left:1016.00px;top:151.21px;font-size:10.5px;color:#1f2937;font-weight:400;font-family:'Liberation Sans', sans-serif;">272h 6m</div>
<div class="t" style="left:1016.00px;top:179.31px;font-size:10.5px;color:#1f2937;font-weight:400;font-family:'Liberation Sans', sans-serif;">29</div>
<div class="t" style="left:1015.80px;top:207.81px;font-size:10.5px;color:#6366f1;font-weight:400;font-family:'Liberation Sans', sans-serif;border-bottom:1px dotted #a5b4fc;padding-bottom:1px">plan one</div>
<div class="t" style="left:1016.00px;top:235.81px;font-size:10.5px;color:#1f2937;font-weight:400;font-family:'Liberation Sans', sans-serif;">Jul 4, 2025</div>
<svg style="position:absolute;left:1018.3px;top:262.5px" width="14" height="14" viewBox="0 0 14 14"><circle cx="7.0" cy="7.0" r="6.8" fill="#151515"/><rect x="3.5" y="3.36" width="5.04" height="2.1" fill="#fff"/><rect x="6.3" y="3.36" width="2.24" height="8.12" fill="#fff"/><rect x="8.82" y="2.8000000000000003" width="1.12" height="4.2" fill="#5b8def"/></svg>
<div class="t" style="left:1038.70px;top:264.61px;font-size:10.5px;color:#1f2937;font-weight:400;font-family:'Liberation Sans', sans-serif;">Tamara</div>
<svg style="position:absolute;left:1018.3px;top:290.3px" width="14" height="14" viewBox="0 0 14 14"><circle cx="7.0" cy="7.0" r="6.8" fill="#151515"/><rect x="3.5" y="3.36" width="5.04" height="2.1" fill="#fff"/><rect x="6.3" y="3.36" width="2.24" height="8.12" fill="#fff"/><rect x="8.82" y="2.8000000000000003" width="1.12" height="4.2" fill="#5b8def"/></svg>
<div class="t" style="left:1038.70px;top:292.61px;font-size:10.5px;color:#1f2937;font-weight:400;font-family:'Liberation Sans', sans-serif;">Tamara</div>
<div class="t" style="left:497.00px;top:329.83px;font-size:12.25px;color:#6366f1;font-weight:400;font-family:'Liberation Sans', sans-serif;letter-spacing:-0.038px;">Tests</div>
<div class="t" style="left:542.70px;top:329.83px;font-size:12.25px;color:#71717a;font-weight:400;font-family:'Liberation Sans', sans-serif;letter-spacing:0.069px;">Statistics</div>
<div class="t" style="left:610.25px;top:329.83px;font-size:12.25px;color:#71717a;font-weight:400;font-family:'Liberation Sans', sans-serif;letter-spacing:-0.111px;">Defects</div>
<div style="position:absolute;left:476px;top:351px;width:782px;height:1px;background:#eef0f3"></div>
<div style="position:absolute;left:497px;top:350.3px;width:28.5px;height:2.2px;background:#6366f1;border-radius:1px"></div>
<div style="position:absolute;left:496.75px;top:360.8px;width:83.5px;height:25px;background:#fafafa;border:1px solid #e7e7ea;border-radius:6px"></div>
<div class="t" style="left:508.60px;top:368.30px;font-size:10.4px;color:#3f3f46;font-weight:400;font-family:'Liberation Sans', sans-serif;-webkit-text-stroke-width:0.4px;">Passed</div>
<div style="position:absolute;left:548.4px;top:366px;width:19.6px;height:14px;background:#d1fae5;border-radius:4px"></div>
<div class="t" style="left:548.4px;width:19.6px;text-align:center;top:369px;font-size:9px;color:#047857">21</div>
<div style="position:absolute;left:585.6px;top:360.8px;width:74px;height:25px;background:#fafafa;border:1px solid #e7e7ea;border-radius:6px"></div>
<div class="t" style="left:597.00px;top:368.30px;font-size:10.4px;color:#3f3f46;font-weight:400;font-family:'Liberation Sans', sans-serif;-webkit-text-stroke-width:0.4px;">Failed</div>
<div style="position:absolute;left:631.4px;top:366px;width:16.1px;height:14px;background:#fee2e2;border-radius:4px"></div>
<div class="t" style="left:631.4px;width:16.1px;text-align:center;top:369px;font-size:9px;color:#b91c1c">6</div>
<div style="position:absolute;left:665.5px;top:360.8px;width:83.3px;height:25px;background:#fafafa;border:1px solid #e7e7ea;border-radius:6px"></div>
<div class="t" style="left:676.90px;top:368.30px;font-size:10.4px;color:#3f3f46;font-weight:400;font-family:'Liberation Sans', sans-serif;-webkit-text-stroke-width:0.4px;">Skipped</div>
<div style="position:absolute;left:721px;top:366px;width:16px;height:14px;background:#fef3c7;border-radius:4px"></div>
<div class="t" style="left:721px;width:16px;text-align:center;top:369px;font-size:9px;color:#b45309">2</div>
<div style="position:absolute;left:754.5px;top:360.8px;width:83.5px;height:25px;background:#fafafa;border:1px solid #e7e7ea;border-radius:6px"></div>
<div class="t" style="left:766.25px;top:368.30px;font-size:10.4px;color:#3f3f46;font-weight:400;font-family:'Liberation Sans', sans-serif;-webkit-text-stroke-width:0.4px;">Pending</div>
<div style="position:absolute;left:809.7px;top:366px;width:16.7px;height:14px;background:#f4f4f5;border-radius:4px"></div>
<div class="t" style="left:809.7px;width:16.7px;text-align:center;top:369px;font-size:9px;color:#27272a">0</div>
<div style="position:absolute;left:847.4px;top:360.7px;width:154px;height:25.3px;background:#fff;border:1px solid #e7e8ec;border-radius:6px"></div>
<svg style="position:absolute;left:856px;top:366.5px" width="12" height="12" viewBox="0 0 12 12"><circle cx="4.8" cy="4.8" r="3.6" stroke="#9ca3af" stroke-width="1.3" fill="none"/><path d="M7.5 7.5 L10.8 10.8" stroke="#9ca3af" stroke-width="1.3"/></svg>
<div style="position:absolute;left:875.7px;top:366px;width:107px;height:16px;overflow:hidden">
<div class="t" style="left:0.00px;top:1.71px;font-size:10.5px;color:#9ca3af;font-weight:400;font-family:'Liberation Sans', sans-serif;">Search by title/message</div>
</div>
<svg style="position:absolute;left:1012.5px;top:362.3px" width="21.2" height="21.2" viewBox="0 0 21.2 21.2"><circle cx="10.6" cy="10.6" r="10.4" fill="#151515"/><rect x="5.3" y="5.088" width="7.632" height="3.1799999999999997" fill="#fff"/><rect x="9.54" y="5.088" width="3.392" height="12.296" fill="#fff"/><rect x="13.356" y="4.24" width="1.696" height="6.359999999999999" fill="#5b8def"/></svg>
<div class="t" style="left:497.00px;top:397.08px;font-size:11.6px;color:#27272a;font-weight:400;font-family:'Liberation Sans', sans-serif;letter-spacing:0.146px;">sort by:</div>
<div class="t" style="left:539.50px;top:397.08px;font-size:11.6px;color:#6366f1;font-weight:400;font-family:'Liberation Sans', sans-serif;border-bottom:1px dotted #a5b4fc;padding-bottom:0.5px;padding-right:3.7px;letter-spacing:0.059px;">suite</div>
<div class="t" style="left:568.30px;top:397.08px;font-size:11.6px;color:#27272a;font-weight:400;font-family:'Liberation Sans', sans-serif;">/</div>
<div class="t" style="left:575.00px;top:397.08px;font-size:11.6px;color:#6366f1;font-weight:400;font-family:'Liberation Sans', sans-serif;border-bottom:1px dotted #a5b4fc;padding-bottom:0.5px;padding-right:4.3px;letter-spacing:0.062px;">testcase</div>
<div class="t" style="left:623.20px;top:397.08px;font-size:11.6px;color:#27272a;font-weight:400;font-family:'Liberation Sans', sans-serif;">/</div>
<div class="t" style="left:630.00px;top:397.08px;font-size:11.6px;color:#6366f1;font-weight:400;font-family:'Liberation Sans', sans-serif;border-bottom:1px dotted #a5b4fc;padding-bottom:0.5px;letter-spacing:0.058px;">failure</div>
<div style="position:absolute;left:1142.6px;top:394.6px;width:93px;height:20px;background:#fafafa;border:1px solid #e7e7ea;border-radius:6px"></div>
<svg style="position:absolute;left:1148.5px;top:399.5px" width="12" height="11" viewBox="0 0 12 11"><rect x="0.8" y="0.8" width="9" height="8.4" rx="1" stroke="#3f3f46" stroke-width="1.2" fill="none"/><path d="M0.8 4 H9.8 M4.5 4 V9.2" stroke="#3f3f46" stroke-width="1.1"/><circle cx="9.2" cy="8.4" r="2.2" fill="#3f3f46" stroke="#fafafa" stroke-width="0.8"/></svg>
<div class="t" style="left:1166.00px;top:399.41px;font-size:10.5px;color:#3f3f46;font-weight:400;font-family:'Liberation Sans', sans-serif;-webkit-text-stroke-width:0.35px;">Custom view</div>
<svg style="position:absolute;left:1242.5px;top:399.5px" width="11" height="10" viewBox="0 0 11 10"><path d="M0.5 2.8 H10.5 M0.5 7.2 H10.5" stroke="#a1a1aa" stroke-width="1"/><circle cx="7.5" cy="2.8" r="1.7" fill="#fff" stroke="#a1a1aa" stroke-width="1"/><circle cx="3.5" cy="7.2" r="1.7" fill="#fff" stroke="#a1a1aa" stroke-width="1"/></svg>
<div style="position:absolute;left:1254.7px;top:420px;width:3.5px;height:129px;background:#c3cafc;border-radius:2px"></div>
<svg style="position:absolute;left:497.2px;top:428.0px" width="9" height="9" viewBox="0 0 9 9"><circle cx="4.5" cy="4.5" r="4.4" fill="#10b981"/><path d="M2.5 4.6 L3.9 6 L6.6 3.2" stroke="#fff" stroke-width="1.2" fill="none"/></svg>
<svg style="position:absolute;left:513.6px;top:425.6px" width="11" height="12.5" viewBox="0 0 11 12.5"><rect x="0.7" y="1.6" width="9.6" height="10.2" rx="1.2" stroke="#6b7280" stroke-width="1.2" fill="none"/><rect x="3.2" y="0.5" width="4.6" height="2.4" rx="0.6" fill="#6b7280"/><path d="M3 5 V10 M5 5.3 H8.3 M5 7.5 H8.3 M5 9.7 H8.3" stroke="#6b7280" stroke-width="1"/></svg>
<div class="t" style="left:532.00px;top:428.35px;font-size:9.75px;color:#666d7a;font-weight:400;font-family:'Liberation Mono', monospace;-webkit-text-stroke-width:0.12px;">Shopping Cart @sm…</div>
<svg style="position:absolute;left:654.4px;top:425.5px" width="14" height="14" viewBox="0 0 14 14"><rect x="0" y="0" width="14" height="14" rx="3.2" fill="#fef0c4"/><g transform="scale(1.0)"><path d="M7.1 6.5 L12.2 8.4 L10.2 9.3 L12 11.3 L11.1 12.1 L9.4 10.2 L8.6 12.1 Z" fill="#b4460f"/><circle cx="4.3" cy="3.6" r="0.8" fill="#d0601e"/><circle cx="7" cy="2.7" r="0.8" fill="#d0601e"/><circle cx="9.8" cy="3.6" r="0.8" fill="#d0601e"/><circle cx="2.9" cy="6.2" r="0.8" fill="#d0601e"/><circle cx="4.3" cy="9" r="0.8" fill="#d0601e"/></g></svg>
<div style="position:absolute;left:671.8px;top:424.50px;height:16px;display:flex;align-items:center;white-space:nowrap"><span style="font-size:12px;color:#1f2937;line-height:16px;letter-spacing:-0.047px;width:199.00px;display:inline-block">Add a single item to the shopping cart</span><span style="width:5.6px"></span><svg width="14.5" height="14.5" viewBox="0 0 14.5 14.5" style="display:inline-block;flex:none;position:relative;left:0.5px;top:0px"><circle cx="7.25" cy="7.25" r="6.5" fill="#fff" stroke="#2a2a2a" stroke-width="1.3"/><rect x="3.625" y="3.625" width="5.074999999999999" height="1.885" fill="#111"/><rect x="6.67" y="3.625" width="2.0300000000000002" height="7.6850000000000005" fill="#111"/><rect x="8.7" y="2.9000000000000004" width="1.74" height="4.35" fill="#86a9ef"/></svg><span style="flex:none;background:#e5e7eb;color:#6b7280;font-size:8.6px;line-height:12.5px;height:12.5px;padding:0 6.5px;border-radius:6.5px;margin-left:5.8px;position:relative;top:0.8px">@user_flow</span></div>
<svg style="position:absolute;left:497.2px;top:450.5px" width="9" height="9" viewBox="0 0 9 9"><circle cx="4.5" cy="4.5" r="4.4" fill="#10b981"/><path d="M2.5 4.6 L3.9 6 L6.6 3.2" stroke="#fff" stroke-width="1.2" fill="none"/></svg>
<svg style="position:absolute;left:513.6px;top:448.1px" width="11" height="12.5" viewBox="0 0 11 12.5"><rect x="0.7" y="1.6" width="9.6" height="10.2" rx="1.2" stroke="#6b7280" stroke-width="1.2" fill="none"/><rect x="3.2" y="0.5" width="4.6" height="2.4" rx="0.6" fill="#6b7280"/><path d="M3 5 V10 M5 5.3 H8.3 M5 7.5 H8.3 M5 9.7 H8.3" stroke="#6b7280" stroke-width="1"/></svg>
<div class="t" style="left:532.00px;top:450.85px;font-size:9.75px;color:#666d7a;font-weight:400;font-family:'Liberation Mono', monospace;-webkit-text-stroke-width:0.12px;">Shopping Cart @sm…</div>
<svg style="position:absolute;left:654.4px;top:448.0px" width="14" height="14" viewBox="0 0 14 14"><rect x="0" y="0" width="14" height="14" rx="3.2" fill="#fef0c4"/><g transform="scale(1.0)"><path d="M7.1 6.5 L12.2 8.4 L10.2 9.3 L12 11.3 L11.1 12.1 L9.4 10.2 L8.6 12.1 Z" fill="#b4460f"/><circle cx="4.3" cy="3.6" r="0.8" fill="#d0601e"/><circle cx="7" cy="2.7" r="0.8" fill="#d0601e"/><circle cx="9.8" cy="3.6" r="0.8" fill="#d0601e"/><circle cx="2.9" cy="6.2" r="0.8" fill="#d0601e"/><circle cx="4.3" cy="9" r="0.8" fill="#d0601e"/></g></svg>
<div style="position:absolute;left:671.8px;top:447.00px;height:16px;display:flex;align-items:center;white-space:nowrap"><span style="font-size:12px;color:#1f2937;line-height:16px;letter-spacing:-0.035px;width:139.90px;display:inline-block">Shopping with placeholder</span><span style="width:5.6px"></span><svg width="14.5" height="14.5" viewBox="0 0 14.5 14.5" style="display:inline-block;flex:none;position:relative;left:0.5px;top:0px"><circle cx="7.25" cy="7.25" r="6.5" fill="#fff" stroke="#2a2a2a" stroke-width="1.3"/><rect x="3.625" y="3.625" width="5.074999999999999" height="1.885" fill="#111"/><rect x="6.67" y="3.625" width="2.0300000000000002" height="7.6850000000000005" fill="#111"/><rect x="8.7" y="2.9000000000000004" width="1.74" height="4.35" fill="#86a9ef"/></svg></div>
<svg style="position:absolute;left:497.2px;top:473.0px" width="9" height="9" viewBox="0 0 9 9"><circle cx="4.5" cy="4.5" r="4.4" fill="#10b981"/><path d="M2.5 4.6 L3.9 6 L6.6 3.2" stroke="#fff" stroke-width="1.2" fill="none"/></svg>
<svg style="position:absolute;left:513.6px;top:470.6px" width="11" height="12.5" viewBox="0 0 11 12.5"><rect x="0.7" y="1.6" width="9.6" height="10.2" rx="1.2" stroke="#6b7280" stroke-width="1.2" fill="none"/><rect x="3.2" y="0.5" width="4.6" height="2.4" rx="0.6" fill="#6b7280"/><path d="M3 5 V10 M5 5.3 H8.3 M5 7.5 H8.3 M5 9.7 H8.3" stroke="#6b7280" stroke-width="1"/></svg>
<div class="t" style="left:532.00px;top:473.35px;font-size:9.75px;color:#666d7a;font-weight:400;font-family:'Liberation Mono', monospace;-webkit-text-stroke-width:0.12px;">Shopping Cart @sm…</div>
<svg style="position:absolute;left:654.4px;top:470.5px" width="14" height="14" viewBox="0 0 14 14"><rect x="0" y="0" width="14" height="14" rx="3.2" fill="#fef0c4"/><g transform="scale(1.0)"><path d="M7.1 6.5 L12.2 8.4 L10.2 9.3 L12 11.3 L11.1 12.1 L9.4 10.2 L8.6 12.1 Z" fill="#b4460f"/><circle cx="4.3" cy="3.6" r="0.8" fill="#d0601e"/><circle cx="7" cy="2.7" r="0.8" fill="#d0601e"/><circle cx="9.8" cy="3.6" r="0.8" fill="#d0601e"/><circle cx="2.9" cy="6.2" r="0.8" fill="#d0601e"/><circle cx="4.3" cy="9" r="0.8" fill="#d0601e"/></g></svg>
<div style="position:absolute;left:671.8px;top:469.50px;height:16px;display:flex;align-items:center;white-space:nowrap"><span style="font-size:12px;color:#1f2937;line-height:16px;letter-spacing:-0.035px;width:139.90px;display:inline-block">Shopping with placeholder</span><span style="width:5.6px"></span><svg width="14.5" height="14.5" viewBox="0 0 14.5 14.5" style="display:inline-block;flex:none;position:relative;left:0.5px;top:0px"><circle cx="7.25" cy="7.25" r="6.5" fill="#fff" stroke="#2a2a2a" stroke-width="1.3"/><rect x="3.625" y="3.625" width="5.074999999999999" height="1.885" fill="#111"/><rect x="6.67" y="3.625" width="2.0300000000000002" height="7.6850000000000005" fill="#111"/><rect x="8.7" y="2.9000000000000004" width="1.74" height="4.35" fill="#86a9ef"/></svg></div>
<svg style="position:absolute;left:497.2px;top:495.5px" width="9" height="9" viewBox="0 0 9 9"><circle cx="4.5" cy="4.5" r="4.4" fill="#ef4444"/><rect x="2.2" y="3.8" width="4.6" height="1.5" rx="0.5" fill="#fff"/></svg>
<svg style="position:absolute;left:513.6px;top:493.1px" width="11" height="12.5" viewBox="0 0 11 12.5"><rect x="0.7" y="1.6" width="9.6" height="10.2" rx="1.2" stroke="#6b7280" stroke-width="1.2" fill="none"/><rect x="3.2" y="0.5" width="4.6" height="2.4" rx="0.6" fill="#6b7280"/><path d="M3 5 V10 M5 5.3 H8.3 M5 7.5 H8.3 M5 9.7 H8.3" stroke="#6b7280" stroke-width="1"/></svg>
<div class="t" style="left:532.00px;top:495.85px;font-size:9.75px;color:#666d7a;font-weight:400;font-family:'Liberation Mono', monospace;-webkit-text-stroke-width:0.12px;">Shopping Cart @sm…</div>
<svg style="position:absolute;left:654.4px;top:493.0px" width="14" height="14" viewBox="0 0 14 14"><rect x="0" y="0" width="14" height="14" rx="3.2" fill="#fef0c4"/><g transform="scale(1.0)"><path d="M7.1 6.5 L12.2 8.4 L10.2 9.3 L12 11.3 L11.1 12.1 L9.4 10.2 L8.6 12.1 Z" fill="#b4460f"/><circle cx="4.3" cy="3.6" r="0.8" fill="#d0601e"/><circle cx="7" cy="2.7" r="0.8" fill="#d0601e"/><circle cx="9.8" cy="3.6" r="0.8" fill="#d0601e"/><circle cx="2.9" cy="6.2" r="0.8" fill="#d0601e"/><circle cx="4.3" cy="9" r="0.8" fill="#d0601e"/></g></svg>
<div style="position:absolute;left:671.8px;top:492.00px;height:16px;display:flex;align-items:center;white-space:nowrap"><span style="font-size:12px;color:#1f2937;line-height:16px;letter-spacing:0.011px;width:253.80px;display:inline-block">Add multiple different items to the shopping cart</span><span style="width:5.6px"></span><svg width="14.5" height="14.5" viewBox="0 0 14.5 14.5" style="display:inline-block;flex:none;position:relative;left:0.5px;top:0px"><circle cx="7.25" cy="7.25" r="6.5" fill="#fff" stroke="#2a2a2a" stroke-width="1.3"/><rect x="3.625" y="3.625" width="5.074999999999999" height="1.885" fill="#111"/><rect x="6.67" y="3.625" width="2.0300000000000002" height="7.6850000000000005" fill="#111"/><rect x="8.7" y="2.9000000000000004" width="1.74" height="4.35" fill="#86a9ef"/></svg><span style="flex:none;background:#e5e7eb;color:#6b7280;font-size:8.6px;line-height:12.5px;height:12.5px;padding:0 6.5px;border-radius:6.5px;margin-left:5.8px;position:relative;top:0.8px">@user_flow</span></div>
<svg style="position:absolute;left:497.2px;top:518.0px" width="9" height="9" viewBox="0 0 9 9"><circle cx="4.5" cy="4.5" r="4.4" fill="#10b981"/><path d="M2.5 4.6 L3.9 6 L6.6 3.2" stroke="#fff" stroke-width="1.2" fill="none"/></svg>
<svg style="position:absolute;left:513.6px;top:515.6px" width="11" height="12.5" viewBox="0 0 11 12.5"><rect x="0.7" y="1.6" width="9.6" height="10.2" rx="1.2" stroke="#6b7280" stroke-width="1.2" fill="none"/><rect x="3.2" y="0.5" width="4.6" height="2.4" rx="0.6" fill="#6b7280"/><path d="M3 5 V10 M5 5.3 H8.3 M5 7.5 H8.3 M5 9.7 H8.3" stroke="#6b7280" stroke-width="1"/></svg>
<div class="t" style="left:532.00px;top:518.35px;font-size:9.75px;color:#666d7a;font-weight:400;font-family:'Liberation Mono', monospace;-webkit-text-stroke-width:0.12px;">Attachments @first</div>
<svg style="position:absolute;left:654.4px;top:515.5px" width="14" height="14" viewBox="0 0 14 14"><rect x="0" y="0" width="14" height="14" rx="3.2" fill="#fef0c4"/><g transform="scale(1.0)"><path d="M7.1 6.5 L12.2 8.4 L10.2 9.3 L12 11.3 L11.1 12.1 L9.4 10.2 L8.6 12.1 Z" fill="#b4460f"/><circle cx="4.3" cy="3.6" r="0.8" fill="#d0601e"/><circle cx="7" cy="2.7" r="0.8" fill="#d0601e"/><circle cx="9.8" cy="3.6" r="0.8" fill="#d0601e"/><circle cx="2.9" cy="6.2" r="0.8" fill="#d0601e"/><circle cx="4.3" cy="9" r="0.8" fill="#d0601e"/></g></svg>
<div style="position:absolute;left:671.8px;top:514.50px;height:16px;display:flex;align-items:center;white-space:nowrap"><span style="font-size:12px;color:#1f2937;line-height:16px;letter-spacing:-0.063px;width:173.50px;display:inline-block">Uploading an Attachment in Chat</span><span style="width:5.6px"></span><svg width="14.5" height="14.5" viewBox="0 0 14.5 14.5" style="display:inline-block;flex:none;position:relative;left:0.5px;top:0px"><circle cx="7.25" cy="7.25" r="6.5" fill="#fff" stroke="#2a2a2a" stroke-width="1.3"/><rect x="3.625" y="3.625" width="5.074999999999999" height="1.885" fill="#111"/><rect x="6.67" y="3.625" width="2.0300000000000002" height="7.6850000000000005" fill="#111"/><rect x="8.7" y="2.9000000000000004" width="1.74" height="4.35" fill="#86a9ef"/></svg></div>
<svg style="position:absolute;left:497.2px;top:540.5px" width="9" height="9" viewBox="0 0 9 9"><circle cx="4.5" cy="4.5" r="4.4" fill="#10b981"/><path d="M2.5 4.6 L3.9 6 L6.6 3.2" stroke="#fff" stroke-width="1.2" fill="none"/></svg>
<svg style="position:absolute;left:513.6px;top:538.1px" width="11" height="12.5" viewBox="0 0 11 12.5"><rect x="0.7" y="1.6" width="9.6" height="10.2" rx="1.2" stroke="#6b7280" stroke-width="1.2" fill="none"/><rect x="3.2" y="0.5" width="4.6" height="2.4" rx="0.6" fill="#6b7280"/><path d="M3 5 V10 M5 5.3 H8.3 M5 7.5 H8.3 M5 9.7 H8.3" stroke="#6b7280" stroke-width="1"/></svg>
<div class="t" style="left:532.00px;top:540.85px;font-size:9.75px;color:#666d7a;font-weight:400;font-family:'Liberation Mono', monospace;-webkit-text-stroke-width:0.12px;">Attachments @first</div>
<svg style="position:absolute;left:654.4px;top:538.0px" width="14" height="14" viewBox="0 0 14 14"><rect x="0" y="0" width="14" height="14" rx="3.2" fill="#fef0c4"/><g transform="scale(1.0)"><path d="M7.1 6.5 L12.2 8.4 L10.2 9.3 L12 11.3 L11.1 12.1 L9.4 10.2 L8.6 12.1 Z" fill="#b4460f"/><circle cx="4.3" cy="3.6" r="0.8" fill="#d0601e"/><circle cx="7" cy="2.7" r="0.8" fill="#d0601e"/><circle cx="9.8" cy="3.6" r="0.8" fill="#d0601e"/><circle cx="2.9" cy="6.2" r="0.8" fill="#d0601e"/><circle cx="4.3" cy="9" r="0.8" fill="#d0601e"/></g></svg>
<div style="position:absolute;left:671.8px;top:537.00px;height:16px;display:flex;align-items:center;white-space:nowrap"><span style="font-size:12px;color:#1f2937;line-height:16px;letter-spacing:-0.061px;width:246.00px;display:inline-block">Viewing and Downloading Attachments in Chat</span><span style="width:5.6px"></span><svg width="14.5" height="14.5" viewBox="0 0 14.5 14.5" style="display:inline-block;flex:none;position:relative;left:0.5px;top:0px"><circle cx="7.25" cy="7.25" r="6.5" fill="#fff" stroke="#2a2a2a" stroke-width="1.3"/><rect x="3.625" y="3.625" width="5.074999999999999" height="1.885" fill="#111"/><rect x="6.67" y="3.625" width="2.0300000000000002" height="7.6850000000000005" fill="#111"/><rect x="8.7" y="2.9000000000000004" width="1.74" height="4.35" fill="#86a9ef"/></svg></div>
<svg style="position:absolute;left:497.2px;top:563.0px" width="9" height="9" viewBox="0 0 9 9"><circle cx="4.5" cy="4.5" r="4.4" fill="#10b981"/><path d="M2.5 4.6 L3.9 6 L6.6 3.2" stroke="#fff" stroke-width="1.2" fill="none"/></svg>
<svg style="position:absolute;left:513.6px;top:560.6px" width="11" height="12.5" viewBox="0 0 11 12.5"><rect x="0.7" y="1.6" width="9.6" height="10.2" rx="1.2" stroke="#6b7280" stroke-width="1.2" fill="none"/><rect x="3.2" y="0.5" width="4.6" height="2.4" rx="0.6" fill="#6b7280"/><path d="M3 5 V10 M5 5.3 H8.3 M5 7.5 H8.3 M5 9.7 H8.3" stroke="#6b7280" stroke-width="1"/></svg>
<div class="t" style="left:532.00px;top:563.35px;font-size:9.75px;color:#666d7a;font-weight:400;font-family:'Liberation Mono', monospace;-webkit-text-stroke-width:0.12px;">Attachments @first</div>
<svg style="position:absolute;left:654.4px;top:560.5px" width="14" height="14" viewBox="0 0 14 14"><rect x="0" y="0" width="14" height="14" rx="3.2" fill="#fef0c4"/><g transform="scale(1.0)"><path d="M7.1 6.5 L12.2 8.4 L10.2 9.3 L12 11.3 L11.1 12.1 L9.4 10.2 L8.6 12.1 Z" fill="#b4460f"/><circle cx="4.3" cy="3.6" r="0.8" fill="#d0601e"/><circle cx="7" cy="2.7" r="0.8" fill="#d0601e"/><circle cx="9.8" cy="3.6" r="0.8" fill="#d0601e"/><circle cx="2.9" cy="6.2" r="0.8" fill="#d0601e"/><circle cx="4.3" cy="9" r="0.8" fill="#d0601e"/></g></svg>
<div style="position:absolute;left:671.8px;top:559.50px;height:16px;display:flex;align-items:center;white-space:nowrap"><span style="font-size:12px;color:#1f2937;line-height:16px;letter-spacing:-0.079px;width:248.00px;display:inline-block">Removing or Deleting an Attachment from Chat</span><span style="width:5.6px"></span><svg width="14.5" height="14.5" viewBox="0 0 14.5 14.5" style="display:inline-block;flex:none;position:relative;left:0.5px;top:0px"><circle cx="7.25" cy="7.25" r="6.5" fill="#fff" stroke="#2a2a2a" stroke-width="1.3"/><rect x="3.625" y="3.625" width="5.074999999999999" height="1.885" fill="#111"/><rect x="6.67" y="3.625" width="2.0300000000000002" height="7.6850000000000005" fill="#111"/><rect x="8.7" y="2.9000000000000004" width="1.74" height="4.35" fill="#86a9ef"/></svg></div>
<svg style="position:absolute;left:497.2px;top:585.5px" width="9" height="9" viewBox="0 0 9 9"><circle cx="4.5" cy="4.5" r="4.4" fill="#10b981"/><path d="M2.5 4.6 L3.9 6 L6.6 3.2" stroke="#fff" stroke-width="1.2" fill="none"/></svg>
<svg style="position:absolute;left:513.6px;top:583.1px" width="11" height="12.5" viewBox="0 0 11 12.5"><rect x="0.7" y="1.6" width="9.6" height="10.2" rx="1.2" stroke="#6b7280" stroke-width="1.2" fill="none"/><rect x="3.2" y="0.5" width="4.6" height="2.4" rx="0.6" fill="#6b7280"/><path d="M3 5 V10 M5 5.3 H8.3 M5 7.5 H8.3 M5 9.7 H8.3" stroke="#6b7280" stroke-width="1"/></svg>
<div class="t" style="left:532.00px;top:585.85px;font-size:9.75px;color:#666d7a;font-weight:400;font-family:'Liberation Mono', monospace;-webkit-text-stroke-width:0.12px;">Attachments @first</div>
<svg style="position:absolute;left:654.4px;top:583.0px" width="14" height="14" viewBox="0 0 14 14"><rect x="0" y="0" width="14" height="14" rx="3.2" fill="#fef0c4"/><g transform="scale(1.0)"><path d="M7.1 6.5 L12.2 8.4 L10.2 9.3 L12 11.3 L11.1 12.1 L9.4 10.2 L8.6 12.1 Z" fill="#b4460f"/><circle cx="4.3" cy="3.6" r="0.8" fill="#d0601e"/><circle cx="7" cy="2.7" r="0.8" fill="#d0601e"/><circle cx="9.8" cy="3.6" r="0.8" fill="#d0601e"/><circle cx="2.9" cy="6.2" r="0.8" fill="#d0601e"/><circle cx="4.3" cy="9" r="0.8" fill="#d0601e"/></g></svg>
<div style="position:absolute;left:671.8px;top:582.00px;height:16px;display:flex;align-items:center;white-space:nowrap"><span style="font-size:12px;color:#1f2937;line-height:16px;letter-spacing:-0.084px;width:195.85px;display:inline-block">Uploading Large Attachments in Chat</span><span style="width:5.6px"></span><svg width="14.5" height="14.5" viewBox="0 0 14.5 14.5" style="display:inline-block;flex:none;position:relative;left:0.5px;top:0px"><circle cx="7.25" cy="7.25" r="6.5" fill="#fff" stroke="#2a2a2a" stroke-width="1.3"/><rect x="3.625" y="3.625" width="5.074999999999999" height="1.885" fill="#111"/><rect x="6.67" y="3.625" width="2.0300000000000002" height="7.6850000000000005" fill="#111"/><rect x="8.7" y="2.9000000000000004" width="1.74" height="4.35" fill="#86a9ef"/></svg><span style="flex:none;background:#e5e7eb;color:#6b7280;font-size:8.6px;line-height:12.5px;height:12.5px;padding:0 6.5px;border-radius:6.5px;margin-left:5.8px;position:relative;top:0.8px">@tag_A</span></div>
<svg style="position:absolute;left:497.2px;top:608.0px" width="9" height="9" viewBox="0 0 9 9"><circle cx="4.5" cy="4.5" r="4.4" fill="#10b981"/><path d="M2.5 4.6 L3.9 6 L6.6 3.2" stroke="#fff" stroke-width="1.2" fill="none"/></svg>
<svg style="position:absolute;left:513.6px;top:605.6px" width="11" height="12.5" viewBox="0 0 11 12.5"><rect x="0.7" y="1.6" width="9.6" height="10.2" rx="1.2" stroke="#6b7280" stroke-width="1.2" fill="none"/><rect x="3.2" y="0.5" width="4.6" height="2.4" rx="0.6" fill="#6b7280"/><path d="M3 5 V10 M5 5.3 H8.3 M5 7.5 H8.3 M5 9.7 H8.3" stroke="#6b7280" stroke-width="1"/></svg>
<div class="t" style="left:532.00px;top:608.35px;font-size:9.75px;color:#666d7a;font-weight:400;font-family:'Liberation Mono', monospace;-webkit-text-stroke-width:0.12px;">Attachments @first</div>
<svg style="position:absolute;left:654.4px;top:605.5px" width="14" height="14" viewBox="0 0 14 14"><rect x="0" y="0" width="14" height="14" rx="3.2" fill="#fef0c4"/><g transform="scale(1.0)"><path d="M7.1 6.5 L12.2 8.4 L10.2 9.3 L12 11.3 L11.1 12.1 L9.4 10.2 L8.6 12.1 Z" fill="#b4460f"/><circle cx="4.3" cy="3.6" r="0.8" fill="#d0601e"/><circle cx="7" cy="2.7" r="0.8" fill="#d0601e"/><circle cx="9.8" cy="3.6" r="0.8" fill="#d0601e"/><circle cx="2.9" cy="6.2" r="0.8" fill="#d0601e"/><circle cx="4.3" cy="9" r="0.8" fill="#d0601e"/></g></svg>
<div style="position:absolute;left:671.8px;top:604.50px;height:16px;display:flex;align-items:center;white-space:nowrap"><span style="font-size:12px;color:#1f2937;line-height:16px;letter-spacing:-0.098px;width:191.00px;display:inline-block">File Type Restrictions During Upload</span><span style="width:5.6px"></span><svg width="14.5" height="14.5" viewBox="0 0 14.5 14.5" style="display:inline-block;flex:none;position:relative;left:0.5px;top:0px"><circle cx="7.25" cy="7.25" r="6.5" fill="#fff" stroke="#2a2a2a" stroke-width="1.3"/><rect x="3.625" y="3.625" width="5.074999999999999" height="1.885" fill="#111"/><rect x="6.67" y="3.625" width="2.0300000000000002" height="7.6850000000000005" fill="#111"/><rect x="8.7" y="2.9000000000000004" width="1.74" height="4.35" fill="#86a9ef"/></svg><span style="flex:none;background:#e5e7eb;color:#6b7280;font-size:8.6px;line-height:12.5px;height:12.5px;padding:0 6.5px;border-radius:6.5px;margin-left:5.8px;position:relative;top:0.8px">@story: 12545</span><span style="flex:none;background:#e5e7eb;color:#6b7280;font-size:8.6px;line-height:12.5px;height:12.5px;padding:0 6.5px;border-radius:6.5px;margin-left:5.8px;position:relative;top:0.8px">@story: 12445</span><span style="flex:none;background:#e5e7eb;color:#6b7280;font-size:8.6px;line-height:12.5px;height:12.5px;padding:0 6.5px;border-radius:6.5px;margin-left:5.8px;position:relative;top:0.8px">@tag_A</span></div>
<svg style="position:absolute;left:497.2px;top:630.5px" width="9" height="9" viewBox="0 0 9 9"><circle cx="4.5" cy="4.5" r="4.4" fill="#10b981"/><path d="M2.5 4.6 L3.9 6 L6.6 3.2" stroke="#fff" stroke-width="1.2" fill="none"/></svg>
<svg style="position:absolute;left:513.6px;top:628.1px" width="11" height="12.5" viewBox="0 0 11 12.5"><rect x="0.7" y="1.6" width="9.6" height="10.2" rx="1.2" stroke="#6b7280" stroke-width="1.2" fill="none"/><rect x="3.2" y="0.5" width="4.6" height="2.4" rx="0.6" fill="#6b7280"/><path d="M3 5 V10 M5 5.3 H8.3 M5 7.5 H8.3 M5 9.7 H8.3" stroke="#6b7280" stroke-width="1"/></svg>
<div class="t" style="left:532.00px;top:630.85px;font-size:9.75px;color:#666d7a;font-weight:400;font-family:'Liberation Mono', monospace;-webkit-text-stroke-width:0.12px;">Attachments @first</div>
<svg style="position:absolute;left:654.4px;top:628.0px" width="14" height="14" viewBox="0 0 14 14"><rect x="0" y="0" width="14" height="14" rx="3.2" fill="#fef0c4"/><g transform="scale(1.0)"><path d="M7.1 6.5 L12.2 8.4 L10.2 9.3 L12 11.3 L11.1 12.1 L9.4 10.2 L8.6 12.1 Z" fill="#b4460f"/><circle cx="4.3" cy="3.6" r="0.8" fill="#d0601e"/><circle cx="7" cy="2.7" r="0.8" fill="#d0601e"/><circle cx="9.8" cy="3.6" r="0.8" fill="#d0601e"/><circle cx="2.9" cy="6.2" r="0.8" fill="#d0601e"/><circle cx="4.3" cy="9" r="0.8" fill="#d0601e"/></g></svg>
<div style="position:absolute;left:671.8px;top:627.00px;height:16px;display:flex;align-items:center;white-space:nowrap"><span style="font-size:12px;color:#1f2937;line-height:16px;letter-spacing:-0.014px;width:151.70px;display:inline-block">Multiple Attachments Upload</span><span style="width:5.6px"></span><svg width="14.5" height="14.5" viewBox="0 0 14.5 14.5" style="display:inline-block;flex:none;position:relative;left:0.5px;top:0px"><circle cx="7.25" cy="7.25" r="6.5" fill="#fff" stroke="#2a2a2a" stroke-width="1.3"/><rect x="3.625" y="3.625" width="5.074999999999999" height="1.885" fill="#111"/><rect x="6.67" y="3.625" width="2.0300000000000002" height="7.6850000000000005" fill="#111"/><rect x="8.7" y="2.9000000000000004" width="1.74" height="4.35" fill="#86a9ef"/></svg><span style="flex:none;background:#e5e7eb;color:#6b7280;font-size:8.6px;line-height:12.5px;height:12.5px;padding:0 6.5px;border-radius:6.5px;margin-left:5.8px;position:relative;top:0.8px">@story: 12545</span><span style="flex:none;background:#e5e7eb;color:#6b7280;font-size:8.6px;line-height:12.5px;height:12.5px;padding:0 6.5px;border-radius:6.5px;margin-left:5.8px;position:relative;top:0.8px">@story: 12445</span><span style="flex:none;background:#e5e7eb;color:#6b7280;font-size:8.6px;line-height:12.5px;height:12.5px;padding:0 6.5px;border-radius:6.5px;margin-left:5.8px;position:relative;top:0.8px">@tag_A</span></div>
<svg style="position:absolute;left:497.2px;top:653.0px" width="9" height="9" viewBox="0 0 9 9"><circle cx="4.5" cy="4.5" r="4.4" fill="#10b981"/><path d="M2.5 4.6 L3.9 6 L6.6 3.2" stroke="#fff" stroke-width="1.2" fill="none"/></svg>
<svg style="position:absolute;left:513.6px;top:650.6px" width="11" height="12.5" viewBox="0 0 11 12.5"><rect x="0.7" y="1.6" width="9.6" height="10.2" rx="1.2" stroke="#6b7280" stroke-width="1.2" fill="none"/><rect x="3.2" y="0.5" width="4.6" height="2.4" rx="0.6" fill="#6b7280"/><path d="M3 5 V10 M5 5.3 H8.3 M5 7.5 H8.3 M5 9.7 H8.3" stroke="#6b7280" stroke-width="1"/></svg>
<div class="t" style="left:532.00px;top:653.35px;font-size:9.75px;color:#666d7a;font-weight:400;font-family:'Liberation Mono', monospace;-webkit-text-stroke-width:0.12px;">Attachments @first</div>
<svg style="position:absolute;left:654.4px;top:650.5px" width="14" height="14" viewBox="0 0 14 14"><rect x="0" y="0" width="14" height="14" rx="3.2" fill="#fef0c4"/><g transform="scale(1.0)"><path d="M7.1 6.5 L12.2 8.4 L10.2 9.3 L12 11.3 L11.1 12.1 L9.4 10.2 L8.6 12.1 Z" fill="#b4460f"/><circle cx="4.3" cy="3.6" r="0.8" fill="#d0601e"/><circle cx="7" cy="2.7" r="0.8" fill="#d0601e"/><circle cx="9.8" cy="3.6" r="0.8" fill="#d0601e"/><circle cx="2.9" cy="6.2" r="0.8" fill="#d0601e"/><circle cx="4.3" cy="9" r="0.8" fill="#d0601e"/></g></svg>
<div style="position:absolute;left:671.8px;top:649.50px;height:16px;display:flex;align-items:center;white-space:nowrap"><span style="font-size:12px;color:#1f2937;line-height:16px;letter-spacing:-0.149px;width:122.10px;display:inline-block">Image Preview on Click</span><span style="width:5.6px"></span><svg width="14.5" height="14.5" viewBox="0 0 14.5 14.5" style="display:inline-block;flex:none;position:relative;left:0.5px;top:0px"><circle cx="7.25" cy="7.25" r="6.5" fill="#fff" stroke="#2a2a2a" stroke-width="1.3"/><rect x="3.625" y="3.625" width="5.074999999999999" height="1.885" fill="#111"/><rect x="6.67" y="3.625" width="2.0300000000000002" height="7.6850000000000005" fill="#111"/><rect x="8.7" y="2.9000000000000004" width="1.74" height="4.35" fill="#86a9ef"/></svg><span style="flex:none;background:#e5e7eb;color:#6b7280;font-size:8.6px;line-height:12.5px;height:12.5px;padding:0 6.5px;border-radius:6.5px;margin-left:5.8px;position:relative;top:0.8px">@story: 12545</span><span style="flex:none;background:#e5e7eb;color:#6b7280;font-size:8.6px;line-height:12.5px;height:12.5px;padding:0 6.5px;border-radius:6.5px;margin-left:5.8px;position:relative;top:0.8px">@story: 12445</span><span style="flex:none;background:#e5e7eb;color:#6b7280;font-size:8.6px;line-height:12.5px;height:12.5px;padding:0 6.5px;border-radius:6.5px;margin-left:5.8px;position:relative;top:0.8px">@tag_A</span></div>
<svg style="position:absolute;left:497.2px;top:675.5px" width="9" height="9" viewBox="0 0 9 9"><circle cx="4.5" cy="4.5" r="4.4" fill="#10b981"/><path d="M2.5 4.6 L3.9 6 L6.6 3.2" stroke="#fff" stroke-width="1.2" fill="none"/></svg>
<svg style="position:absolute;left:513.6px;top:673.1px" width="11" height="12.5" viewBox="0 0 11 12.5"><rect x="0.7" y="1.6" width="9.6" height="10.2" rx="1.2" stroke="#6b7280" stroke-width="1.2" fill="none"/><rect x="3.2" y="0.5" width="4.6" height="2.4" rx="0.6" fill="#6b7280"/><path d="M3 5 V10 M5 5.3 H8.3 M5 7.5 H8.3 M5 9.7 H8.3" stroke="#6b7280" stroke-width="1"/></svg>
<div class="t" style="left:532.00px;top:675.85px;font-size:9.75px;color:#666d7a;font-weight:400;font-family:'Liberation Mono', monospace;-webkit-text-stroke-width:0.12px;">Attachments @first</div>
<svg style="position:absolute;left:654.4px;top:673.0px" width="14" height="14" viewBox="0 0 14 14"><rect x="0" y="0" width="14" height="14" rx="3.2" fill="#fef0c4"/><g transform="scale(1.0)"><path d="M7.1 6.5 L12.2 8.4 L10.2 9.3 L12 11.3 L11.1 12.1 L9.4 10.2 L8.6 12.1 Z" fill="#b4460f"/><circle cx="4.3" cy="3.6" r="0.8" fill="#d0601e"/><circle cx="7" cy="2.7" r="0.8" fill="#d0601e"/><circle cx="9.8" cy="3.6" r="0.8" fill="#d0601e"/><circle cx="2.9" cy="6.2" r="0.8" fill="#d0601e"/><circle cx="4.3" cy="9" r="0.8" fill="#d0601e"/></g></svg>
<div style="position:absolute;left:671.8px;top:672.00px;height:16px;display:flex;align-items:center;white-space:nowrap"><span style="font-size:12px;color:#1f2937;line-height:16px;letter-spacing:-0.111px;width:172.10px;display:inline-block">Attachment Upload Progress Bar</span><span style="width:5.6px"></span><svg width="14.5" height="14.5" viewBox="0 0 14.5 14.5" style="display:inline-block;flex:none;position:relative;left:0.5px;top:0px"><circle cx="7.25" cy="7.25" r="6.5" fill="#fff" stroke="#2a2a2a" stroke-width="1.3"/><rect x="3.625" y="3.625" width="5.074999999999999" height="1.885" fill="#111"/><rect x="6.67" y="3.625" width="2.0300000000000002" height="7.6850000000000005" fill="#111"/><rect x="8.7" y="2.9000000000000004" width="1.74" height="4.35" fill="#86a9ef"/></svg><span style="flex:none;background:#e5e7eb;color:#6b7280;font-size:8.6px;line-height:12.5px;height:12.5px;padding:0 6.5px;border-radius:6.5px;margin-left:5.8px;position:relative;top:0.8px">@story: 12545</span><span style="flex:none;background:#e5e7eb;color:#6b7280;font-size:8.6px;line-height:12.5px;height:12.5px;padding:0 6.5px;border-radius:6.5px;margin-left:5.8px;position:relative;top:0.8px">@story: 12445</span><span style="flex:none;background:#e5e7eb;color:#6b7280;font-size:8.6px;line-height:12.5px;height:12.5px;padding:0 6.5px;border-radius:6.5px;margin-left:5.8px;position:relative;top:0.8px">@tag_A</span></div>
<svg style="position:absolute;left:497.2px;top:698.0px" width="9" height="9" viewBox="0 0 9 9"><circle cx="4.5" cy="4.5" r="4.4" fill="#10b981"/><path d="M2.5 4.6 L3.9 6 L6.6 3.2" stroke="#fff" stroke-width="1.2" fill="none"/></svg>
<svg style="position:absolute;left:513.6px;top:695.6px" width="11" height="12.5" viewBox="0 0 11 12.5"><rect x="0.7" y="1.6" width="9.6" height="10.2" rx="1.2" stroke="#6b7280" stroke-width="1.2" fill="none"/><rect x="3.2" y="0.5" width="4.6" height="2.4" rx="0.6" fill="#6b7280"/><path d="M3 5 V10 M5 5.3 H8.3 M5 7.5 H8.3 M5 9.7 H8.3" stroke="#6b7280" stroke-width="1"/></svg>
<div class="t" style="left:532.00px;top:698.35px;font-size:9.75px;color:#666d7a;font-weight:400;font-family:'Liberation Mono', monospace;-webkit-text-stroke-width:0.12px;">Attachments @first</div>
<svg style="position:absolute;left:654.4px;top:695.5px" width="14" height="14" viewBox="0 0 14 14"><rect x="0" y="0" width="14" height="14" rx="3.2" fill="#fef0c4"/><g transform="scale(1.0)"><path d="M7.1 6.5 L12.2 8.4 L10.2 9.3 L12 11.3 L11.1 12.1 L9.4 10.2 L8.6 12.1 Z" fill="#b4460f"/><circle cx="4.3" cy="3.6" r="0.8" fill="#d0601e"/><circle cx="7" cy="2.7" r="0.8" fill="#d0601e"/><circle cx="9.8" cy="3.6" r="0.8" fill="#d0601e"/><circle cx="2.9" cy="6.2" r="0.8" fill="#d0601e"/><circle cx="4.3" cy="9" r="0.8" fill="#d0601e"/></g></svg>
<div style="position:absolute;left:671.8px;top:694.50px;height:16px;display:flex;align-items:center;white-space:nowrap"><span style="font-size:12px;color:#1f2937;line-height:16px;letter-spacing:-0.143px;width:150.60px;display:inline-block">File Size Limit During Upload</span><span style="width:5.6px"></span><svg width="14.5" height="14.5" viewBox="0 0 14.5 14.5" style="display:inline-block;flex:none;position:relative;left:0.5px;top:0px"><circle cx="7.25" cy="7.25" r="6.5" fill="#fff" stroke="#2a2a2a" stroke-width="1.3"/><rect x="3.625" y="3.625" width="5.074999999999999" height="1.885" fill="#111"/><rect x="6.67" y="3.625" width="2.0300000000000002" height="7.6850000000000005" fill="#111"/><rect x="8.7" y="2.9000000000000004" width="1.74" height="4.35" fill="#86a9ef"/></svg></div>
<div style="position:absolute;left:476px;top:718.5px;width:804px;height:1.5px;background:#e5e7eb"></div>
<div style="position:absolute;left:1045px;top:41px;width:180px;height:272px;background:#fff;border-radius:6px;box-shadow:0 0 0 1px rgba(0,0,0,0.04),0 4px 10px rgba(0,0,0,0.10)"></div>
<svg style="position:absolute;left:1057px;top:53.7px" width="12" height="12" viewBox="0 0 12 12"><path d="M0.9 7.6 Q5 1.6 10.2 5.6" stroke="#334155" stroke-width="1.9" fill="none"/><path d="M8.6 8.2 H12.3 V4 Z" fill="#334155"/></svg>
<div class="t" style="left:1079.00px;top:54.72px;font-size:10.25px;color:#4b5563;font-weight:400;font-family:'Liberation Sans', sans-serif;">Relaunch</div>
<svg style="position:absolute;left:1057px;top:79.6px" width="12" height="12" viewBox="0 0 12 12"><circle cx="6.2" cy="6.2" r="5.4" stroke="#334155" stroke-width="1.4" fill="none"/><path d="M4.8 3.8 L8.6 6.2 L4.8 8.6 Z" fill="#334155"/></svg>
<div class="t" style="left:1079.00px;top:80.62px;font-size:10.25px;color:#4b5563;font-weight:400;font-family:'Liberation Sans', sans-serif;">Advanced Relaunch</div>
<svg style="position:absolute;left:1057px;top:106px" width="12" height="12" viewBox="0 0 12 12"><rect x="3.8" y="3.4" width="7.4" height="8.6" rx="1" stroke="#334155" stroke-width="1.3" fill="none"/><path d="M1 9.6 V1.6 Q1 0.9 1.7 0.9 H8.2" stroke="#334155" stroke-width="1.3" fill="none"/></svg>
<div class="t" style="left:1079.00px;top:107.02px;font-size:10.25px;color:#4b5563;font-weight:400;font-family:'Liberation Sans', sans-serif;">Launch a Copy</div>
<svg style="position:absolute;left:1057px;top:131.7px" width="12" height="12" viewBox="0 0 12 12"><rect x="0.8" y="1" width="10.4" height="2.8" fill="#334155"/><path d="M1.6 4.6 H10.4 V11 H1.6 Z" fill="#334155"/><rect x="4.3" y="6" width="3.4" height="1.2" fill="#fff"/></svg>
<div class="t" style="left:1079.00px;top:132.72px;font-size:10.25px;color:#4b5563;font-weight:400;font-family:'Liberation Sans', sans-serif;">Archive</div>
<svg style="position:absolute;left:1057px;top:157.7px" width="12" height="12" viewBox="0 0 12 12"><path d="M3.2 0.8 H8.8 V1.8 L8 2.3 V5.8 L10 8 V9 H2 V8 L4 5.8 V2.3 L3.2 1.8 Z" fill="#334155"/><rect x="5.4" y="9" width="1.2" height="3" fill="#334155"/></svg>
<div class="t" style="left:1079.00px;top:158.72px;font-size:10.25px;color:#4b5563;font-weight:400;font-family:'Liberation Sans', sans-serif;">Pin</div>
<svg style="position:absolute;left:1057px;top:183.7px" width="12" height="12" viewBox="0 0 12 12"><rect x="0.8" y="1.5" width="10.4" height="9.5" rx="1.2" fill="#334155"/><text x="6" y="8.2" font-size="4.2" fill="#fff" text-anchor="middle" font-family="Liberation Sans" font-weight="700">PDF</text></svg>
<div class="t" style="left:1079.00px;top:184.72px;font-size:10.25px;color:#4b5563;font-weight:400;font-family:'Liberation Sans', sans-serif;">Export as PDF</div>
<svg style="position:absolute;left:1057px;top:209.7px" width="12" height="12" viewBox="0 0 12 12"><path d="M1 6.2 H10.5 M6.8 2.5 L10.5 6.2 L6.8 9.9" stroke="#334155" stroke-width="1.4" fill="none"/></svg>
<div class="t" style="left:1079.00px;top:210.72px;font-size:10.25px;color:#4b5563;font-weight:400;font-family:'Liberation Sans', sans-serif;">Move</div>
<svg style="position:absolute;left:1057px;top:236.3px" width="12" height="12" viewBox="0 0 12 12"><path d="M1.2 1.2 H6 L11 6.2 L6.2 11 L1.2 6 Z" stroke="#334155" stroke-width="1.3" fill="none" stroke-linejoin="round"/><circle cx="3.8" cy="3.8" r="0.9" fill="#334155"/><path d="M5 7.5 L7.5 5" stroke="#334155" stroke-width="1"/></svg>
<div class="t" style="left:1079.00px;top:237.32px;font-size:10.25px;color:#4b5563;font-weight:400;font-family:'Liberation Sans', sans-serif;">Labels</div>
<svg style="position:absolute;left:1057px;top:262.25px" width="12" height="12" viewBox="0 0 12 12"><path d="M6 1.5 V10.9 M1.3 6.2 H10.7" stroke="#334155" stroke-width="1.4"/></svg>
<div class="t" style="left:1079.00px;top:263.27px;font-size:10.25px;color:#4b5563;font-weight:400;font-family:'Liberation Sans', sans-serif;">Link to Issue</div>
<svg style="position:absolute;left:1057px;top:289.2px" width="12" height="12" viewBox="0 0 12 12"><path d="M1 2.5 H11 M4 2.5 V1 H8 V2.5" stroke="#dc2626" stroke-width="1.3" fill="none"/><path d="M2.3 4 H9.7 L9.2 11.3 H2.8 Z" stroke="#dc2626" stroke-width="1.3" fill="none"/></svg>
<div class="t" style="left:1079.00px;top:290.22px;font-size:10.25px;color:#dc2626;font-weight:400;font-family:'Liberation Sans', sans-serif;">Delete</div>
<div style="position:absolute;left:1045px;top:229px;width:180px;height:1px;background:#f0f1f3"></div>
<div style="position:absolute;left:1045px;top:282px;width:180px;height:1px;background:#f0f1f3"></div>
<div style="position:absolute;left:70.6px;top:481.2px;width:251.4px;height:34.099999999999966px;border:2.5px solid #ef2b3e"></div>
<div style="position:absolute;left:3.3px;top:94px;width:48.0px;height:38.5px;border:2.5px solid #ef2b3e"></div>
<svg style="position:absolute;left:333px;top:487px" width="47" height="26" viewBox="0 0 47 26"><path d="M44 12.5 H4.5 M12.5 3 L3 12.5 L12.5 22" stroke="#ef2b3e" stroke-width="3.4" fill="none" stroke-linecap="round" stroke-linejoin="round"/></svg>
<div style="position:absolute;left:386px;top:493px;width:16px;height:16px;border-radius:50%;background:#ef2b3e;box-shadow:0 1px 3px rgba(0,0,0,0.2)"></div>
<div class="t" style="left:386px;top:495.4px;width:16px;text-align:center;font-size:11px;font-weight:700;color:#fff;-webkit-text-stroke-width:0">1</div>
<div style="position:absolute;left:1195.3px;top:4.7px;width:36.200000000000045px;height:34.0px;border:2.5px solid #ef2b3e"></div>
<div style="position:absolute;left:1222.5px;top:28px;width:16px;height:16px;border-radius:50%;background:#ef2b3e;box-shadow:0 1px 3px rgba(0,0,0,0.2)"></div>
<div class="t" style="left:1222.5px;top:30.4px;width:16px;text-align:center;font-size:11px;font-weight:700;color:#fff;-webkit-text-stroke-width:0">2</div>
<div style="position:absolute;left:1042.8px;top:95px;width:137.79999999999995px;height:28.299999999999997px;border:2.5px solid #ef2b3e"></div>
<div style="position:absolute;left:1171px;top:113.3px;width:16px;height:16px;border-radius:50%;background:#ef2b3e;box-shadow:0 1px 3px rgba(0,0,0,0.2)"></div>
<div class="t" style="left:1171px;top:115.7px;width:16px;text-align:center;font-size:11px;font-weight:700;color:#fff;-webkit-text-stroke-width:0">3</div>
</body></html>
